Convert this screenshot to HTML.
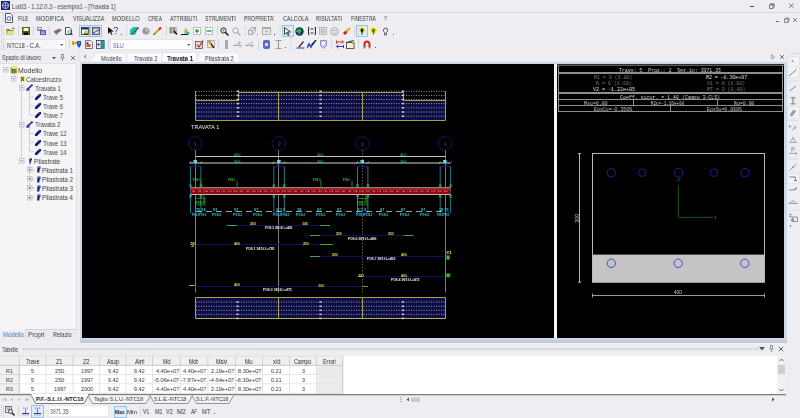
<!DOCTYPE html>
<html><head><meta charset="utf-8">
<style>
*{margin:0;padding:0;box-sizing:border-box}
html,body{width:800px;height:418px;overflow:hidden;background:#eeeef2;-webkit-font-smoothing:antialiased;font-family:"Liberation Sans",sans-serif;color:#1e1e1e;position:relative}
.a{position:absolute;display:block}
.t{position:absolute;white-space:pre;transform-origin:0 0;will-change:transform}
</style></head><body>
<svg class="a" style="left:1px;top:1px;" width="9" height="9" viewBox="0 0 9 9"><rect x="0" y="0" width="9" height="9" fill="#1a237e"/><circle cx="4.5" cy="4.5" r="3" fill="none" stroke="#c8ccf0" stroke-width="1"/><path d="M1.5 4.5h6M4.5 1.5v6" stroke="#c8ccf0" stroke-width=".7"/></svg>
<div class="t" style="left:11.83px;top:3.80px;font-size:6.3px;line-height:6.3px;color:#444;font-weight:400;font-family:'Liberation Sans',sans-serif;transform:scaleX(0.9233);">Ludi3 - 1.12.0.3 - esempio1 - [Travata 1]</div>
<div class="a" style="left:750px;top:6px;width:4px;height:1px;background:#555;"></div>
<svg class="a" style="left:768px;top:2px;" width="8" height="8" viewBox="0 0 8 8"><rect x="1.5" y="3" width="3.5" height="3.5" fill="none" stroke="#555" stroke-width=".7"/><path d="M2.5 3V1.8h3.7v3.5H5" fill="none" stroke="#555" stroke-width=".7"/><path d="M2.5 2.5h3.7" stroke="#555" stroke-width=".6"/></svg>
<svg class="a" style="left:788px;top:2px;" width="7" height="7" viewBox="0 0 7 7"><path d="M1.2 1.5L5.5 5.8M5.5 1.5L1.2 5.8" stroke="#444" stroke-width=".7"/></svg>
<div class="a" style="left:0px;top:12px;width:800px;height:1px;background:#d9d9de;"></div>
<svg class="a" style="left:2px;top:13px;" width="2" height="10" viewBox="0 0 2 10"><path d="M1 0v10" stroke="#b8b8c0" stroke-width="1" stroke-dasharray="1 1"/></svg>
<svg class="a" style="left:5px;top:13px;" width="8" height="10" viewBox="0 0 8 10"><path d="M.5 .5h5l2 2v7h-7z" fill="#fff" stroke="#333" stroke-width=".8"/><circle cx="4" cy="5.5" r="2.5" fill="#7080d0"/><circle cx="4" cy="5.5" r="1.2" fill="#fff"/></svg>
<div class="t" style="left:17.71px;top:15.30px;font-size:7px;line-height:7px;color:#3a3a3a;font-weight:400;font-family:'Liberation Sans',sans-serif;transform:scaleX(0.7035);">FILE</div>
<div class="t" style="left:36.44px;top:15.30px;font-size:7px;line-height:7px;color:#3a3a3a;font-weight:400;font-family:'Liberation Sans',sans-serif;transform:scaleX(0.8235);">MODIFICA</div>
<div class="t" style="left:72.72px;top:15.30px;font-size:7px;line-height:7px;color:#3a3a3a;font-weight:400;font-family:'Liberation Sans',sans-serif;transform:scaleX(0.7812);">VISUALIZZA</div>
<div class="t" style="left:112.30px;top:15.30px;font-size:7px;line-height:7px;color:#3a3a3a;font-weight:400;font-family:'Liberation Sans',sans-serif;transform:scaleX(0.8103);">MODELLO</div>
<div class="t" style="left:147.85px;top:15.30px;font-size:7px;line-height:7px;color:#3a3a3a;font-weight:400;font-family:'Liberation Sans',sans-serif;transform:scaleX(0.7235);">CREA</div>
<div class="t" style="left:170.22px;top:15.30px;font-size:7px;line-height:7px;color:#3a3a3a;font-weight:400;font-family:'Liberation Sans',sans-serif;transform:scaleX(0.7622);">ATTRIBUTI</div>
<div class="t" style="left:205.36px;top:15.30px;font-size:7px;line-height:7px;color:#3a3a3a;font-weight:400;font-family:'Liberation Sans',sans-serif;transform:scaleX(0.7525);">STRUMENTI</div>
<div class="t" style="left:243.99px;top:15.30px;font-size:7px;line-height:7px;color:#3a3a3a;font-weight:400;font-family:'Liberation Sans',sans-serif;transform:scaleX(0.7335);">PROPRIETA'</div>
<div class="t" style="left:282.73px;top:15.30px;font-size:7px;line-height:7px;color:#3a3a3a;font-weight:400;font-family:'Liberation Sans',sans-serif;transform:scaleX(0.7801);">CALCOLA</div>
<div class="t" style="left:316.48px;top:15.30px;font-size:7px;line-height:7px;color:#3a3a3a;font-weight:400;font-family:'Liberation Sans',sans-serif;transform:scaleX(0.7575);">RISULTATI</div>
<div class="t" style="left:351.10px;top:15.30px;font-size:7px;line-height:7px;color:#3a3a3a;font-weight:400;font-family:'Liberation Sans',sans-serif;transform:scaleX(0.7165);">FINESTRA</div>
<div class="t" style="left:383.89px;top:15.30px;font-size:7px;line-height:7px;color:#3a3a3a;font-weight:400;font-family:'Liberation Sans',sans-serif;transform:scaleX(0.7440);">?</div>
<div class="a" style="left:776px;top:21px;width:3px;height:1px;background:#666;"></div>
<svg class="a" style="left:783px;top:17px;" width="7" height="6" viewBox="0 0 7 6"><rect x="1.5" y="2" width="3.5" height="3.5" fill="none" stroke="#666" stroke-width=".7"/><path d="M2.5 2V1h3.5v3.3H5" fill="none" stroke="#666" stroke-width=".7"/></svg>
<svg class="a" style="left:792px;top:17px;" width="6" height="6" viewBox="0 0 6 6"><path d="M1 1L5 5M5 1L1 5" stroke="#555" stroke-width=".7"/></svg>
<div class="t" style="left:1.95px;top:53.90px;font-size:7px;line-height:7px;color:#3a3a3a;font-weight:400;font-family:'Liberation Sans',sans-serif;transform:scaleX(0.7885);">Spazio di lavoro</div>
<svg class="a" style="left:51.5px;top:56.5px;" width="5" height="4" viewBox="0 0 5 4"><path d="M0 0h4L2 2.5z" fill="#555"/></svg>
<svg class="a" style="left:60px;top:54px;" width="5" height="7" viewBox="0 0 5 7"><path d="M1 .5h3M1.5 .5v3.5M3.5 .5v3.5M.5 4h4M2.5 4v3" stroke="#777" stroke-width=".7" fill="none"/></svg>
<svg class="a" style="left:69.5px;top:54.5px;" width="6" height="6" viewBox="0 0 6 6"><path d="M1 1L5 5M5 1L1 5" stroke="#555" stroke-width=".8"/></svg>
<div class="a" style="left:79px;top:50px;width:1px;height:13px;background:#e2e2e6;"></div>
<div class="a" style="left:0px;top:63px;width:77px;height:267px;background:#f5f5f7;border-right:1px solid #dedee3;border-top:1px solid #e2e2e6"></div>
<div class="a" style="left:25px;top:329px;width:53px;height:11px;background:#ececf0;border-top:1px solid #d4d4d8;border-left:1px solid #d8d8dc"></div>
<div class="t" style="left:3.32px;top:331.00px;font-size:7px;line-height:7px;color:#3d7ab8;font-weight:400;font-family:'Liberation Sans',sans-serif;transform:scaleX(0.8538);">Modello</div>
<div class="t" style="left:27.80px;top:331.00px;font-size:7px;line-height:7px;color:#3a3a3a;font-weight:400;font-family:'Liberation Sans',sans-serif;transform:scaleX(0.8900);">Propri</div>
<div class="t" style="left:52.55px;top:331.00px;font-size:7px;line-height:7px;color:#3a3a3a;font-weight:400;font-family:'Liberation Sans',sans-serif;transform:scaleX(0.7998);">Relazio</div>
<div class="a" style="left:80px;top:62px;width:707px;height:281px;background:#cdd7e6;"></div>
<div class="a" style="left:80px;top:340px;width:707px;height:3px;background:#c4cad8;"></div>
<div class="a" style="left:82px;top:64px;width:472px;height:274px;background:#000;"></div>
<div class="a" style="left:554px;top:64px;width:3px;height:274px;background:#f4f4f6;"></div>
<div class="a" style="left:557px;top:64px;width:227px;height:274px;background:#000;"></div>
<svg class="a" style="left:82px;top:50px;" width="165" height="13" viewBox="0 0 165 13"><path d="M2 6.5l2-2v4z" fill="#888"/><path d="M7 12L15 3H44V12z" fill="#fafafc" stroke="#dcdce0" stroke-width=".5"/><path d="M44 12L46 3H80V12z" fill="#fafafc" stroke="#dcdce0" stroke-width=".5"/><path d="M79 12L81 2.5H115V12z" fill="#ffffff" stroke="#d0d0d6" stroke-width=".5"/><path d="M115 12L117 3H157V12z" fill="#fafafc" stroke="#dcdce0" stroke-width=".5"/></svg>
<div class="t" style="left:101.32px;top:54.60px;font-size:7px;line-height:7px;color:#3a3a3a;font-weight:400;font-family:'Liberation Sans',sans-serif;transform:scaleX(0.8538);">Modello</div>
<div class="t" style="left:133.86px;top:54.60px;font-size:7px;line-height:7px;color:#3a3a3a;font-weight:400;font-family:'Liberation Sans',sans-serif;transform:scaleX(0.7994);">Travata 2</div>
<div class="t" style="left:166.94px;top:54.60px;font-size:7px;line-height:7px;color:#111;font-weight:700;font-family:'Liberation Sans',sans-serif;transform:scaleX(0.8571);">Travata 1</div>
<div class="t" style="left:204.54px;top:54.60px;font-size:7px;line-height:7px;color:#3a3a3a;font-weight:400;font-family:'Liberation Sans',sans-serif;transform:scaleX(0.8214);">Pilastrata 2</div>
<svg class="a" style="left:771px;top:54px;" width="5" height="6" viewBox="0 0 5 6"><path d="M.8 .8L3.6 3 .8 5.2z" fill="none" stroke="#777" stroke-width=".7"/></svg>
<svg class="a" style="left:778.5px;top:54px;" width="6" height="6" viewBox="0 0 6 6"><path d="M1 1L5 5M5 1L1 5" stroke="#555" stroke-width=".8"/></svg>
<div class="t" style="left:2.07px;top:347.00px;font-size:6.5px;line-height:6.5px;color:#3a3a3a;font-weight:400;font-family:'Liberation Sans',sans-serif;transform:scaleX(0.7841);">Tabelle</div>
<svg class="a" style="left:23px;top:347px;" width="735" height="4" viewBox="0 0 735 4"><path d="M0 2H735" stroke="#b8b8c0" stroke-width="1.3" stroke-dasharray="1 1"/></svg>
<svg class="a" style="left:759px;top:347px;" width="6" height="4" viewBox="0 0 6 4"><path d="M0 0h6L3 3.5z" fill="#555"/></svg>
<svg class="a" style="left:769px;top:345px;" width="5" height="7" viewBox="0 0 5 7"><path d="M1 .5h3M1.5 .5v3.5M3.5 .5v3.5M.5 4h4M2.5 4v3" stroke="#777" stroke-width=".7" fill="none"/></svg>
<svg class="a" style="left:778px;top:346px;" width="6" height="6" viewBox="0 0 6 6"><path d="M.8 .8L5.2 5.2M5.2 .8L.8 5.2" stroke="#555" stroke-width=".9"/></svg>
<div class="a" style="left:0px;top:356px;width:786px;height:40px;background:#ffffff;"></div>
<svg class="a" style="left:1px;top:25px;" width="3" height="12" viewBox="0 0 3 12"><path d="M.5 0V12M2.5 1V12" stroke="#c2c2c8" stroke-width="1" stroke-dasharray="1 1"/></svg>
<svg class="a" style="left:6px;top:27px;" width="9" height="8" viewBox="0 0 9 8"><path d="M.5 2h3l1 1h3v4.5H.5z" fill="#8c8c1c"/><path d="M1.5 4h7l-1.5 3.5h-6z" fill="#e4e47a"/><path d="M6 1.5l1.5-.5 1 1" stroke="#222" stroke-width=".8" fill="none"/></svg>
<div class="a" style="left:18px;top:26px;width:1px;height:10px;background:#d6d6dc;"></div>
<svg class="a" style="left:22px;top:27px;" width="8" height="8" viewBox="0 0 8 8"><rect x="0" y="0" width="8" height="8" fill="#55551a"/><rect x="1.5" y="1" width="5" height="3" fill="#f4f4e0"/><rect x="2" y="5.5" width="4" height="2.5" fill="#111"/></svg>
<div class="a" style="left:33px;top:26px;width:1px;height:10px;background:#d6d6dc;"></div>
<svg class="a" style="left:37px;top:27px;" width="9" height="8" viewBox="0 0 9 8"><rect x="0" y="0" width="5" height="4" fill="#9090a8"/><rect x="1" y="1" width="3" height="1" fill="#fff"/><rect x="3" y="3" width="6" height="5" fill="#5858b0"/><rect x="4" y="4.5" width="4" height="1" fill="#d0d0f0"/><rect x="4" y="6" width="4" height=".8" fill="#d0d0f0"/></svg>
<div class="a" style="left:49px;top:26px;width:1px;height:10px;background:#d6d6dc;"></div>
<svg class="a" style="left:53px;top:27px;" width="9" height="8" viewBox="0 0 9 8"><path d="M1 4l5-3 3 2-5 4z" fill="#777"/><path d="M1 4l3 3v1L1 5z" fill="#444"/><path d="M3 4l2-1 1 1-2 1z" fill="#e04040"/><path d="M2 3.5l4-2.5 2 1.5" fill="none" stroke="#fff" stroke-width=".6"/></svg>
<svg class="a" style="left:65px;top:27px;" width="8" height="8" viewBox="0 0 8 8"><path d="M.5 .5h4l2 2v5H.5z" fill="#fff" stroke="#222" stroke-width=".8"/><circle cx="4.5" cy="5" r="1.6" fill="none" stroke="#2a8aa0" stroke-width=".9"/><path d="M5.5 6l2 2" stroke="#222" stroke-width="1"/></svg>
<div class="a" style="left:79px;top:25px;width:11px;height:12px;background:#dfeaf6;border:1px solid #99c4e8"></div>
<div class="a" style="left:90px;top:25px;width:12px;height:12px;background:#dfeaf6;border:1px solid #99c4e8"></div>
<svg class="a" style="left:81px;top:27px;" width="8" height="8" viewBox="0 0 8 8"><rect x=".5" y=".5" width="7" height="7" fill="#fff" stroke="#333" stroke-width=".8"/><rect x=".5" y=".5" width="7" height="2" fill="#203080"/><circle cx="5" cy="5.5" r="2.3" fill="#d8d040"/><rect x="3" y="6.5" width="4" height="1.5" fill="#333"/></svg>
<svg class="a" style="left:92px;top:27px;" width="9" height="8" viewBox="0 0 9 8"><rect x=".5" y=".5" width="7" height="7" fill="#9aa" stroke="#444" stroke-width=".8"/><rect x="1.5" y="2.5" width="5" height="4" fill="#e8e8f0"/><path d="M1 6l6-3" stroke="#2040c0" stroke-width="1"/><path d="M7 .5l1.5 1.5" stroke="#d03030" stroke-width="1"/></svg>
<svg class="a" style="left:108px;top:27px;" width="10" height="8" viewBox="0 0 10 8"><path d="M0 0v7l2-2 1.5 3 1-.5-1.5-3h3z" fill="#111"/><path d="M6 1.5q0-1.5 1.8-1.5T9.5 1.7c0 1.3-1.6 1.5-1.6 3" fill="none" stroke="#203070" stroke-width="1"/><rect x="7.4" y="6" width="1" height="1.2" fill="#203070"/></svg>
<div class="a" style="left:121px;top:34px;width:1px;height:1px;background:#555;"></div>
<svg class="a" style="left:126px;top:25px;" width="2" height="12" viewBox="0 0 2 12"><path d="M1 0V12" stroke="#c8c8ce" stroke-width="1" stroke-dasharray="1 1"/></svg>
<svg class="a" style="left:130px;top:27px;" width="9" height="8" viewBox="0 0 9 8"><path d="M0 3l3-3h6L5 8H0z" fill="#28b8b0"/><path d="M2 7L8 1" stroke="#333" stroke-width="1"/><path d="M8 0l1 1-1 1" fill="#c03030"/></svg>
<svg class="a" style="left:142px;top:27px;" width="8" height="8" viewBox="0 0 8 8"><circle cx="4" cy="4" r="3.6" fill="#9a9a9a"/><circle cx="5" cy="3" r="1.4" fill="#c8c8c8"/></svg>
<svg class="a" style="left:153px;top:27px;" width="9" height="8" viewBox="0 0 9 8"><path d="M1 7.5L8 .5" stroke="#c8a020" stroke-width="1.8"/><path d="M6 2.5L8 .5" stroke="#d02828" stroke-width="2"/><path d="M.5 8l1-1.5" stroke="#333" stroke-width="1"/></svg>
<div class="a" style="left:166px;top:26px;width:1px;height:10px;background:#d6d6dc;"></div>
<svg class="a" style="left:169px;top:27px;" width="9" height="8" viewBox="0 0 9 8"><path d="M0 1h8M0 3h8M0 5h8M2 0v7M5 0v7" stroke="#555" stroke-width=".7"/><path d="M5 4l3 3.5" stroke="#111" stroke-width="1.3"/></svg>
<svg class="a" style="left:181px;top:27px;" width="9" height="8" viewBox="0 0 9 8"><path d="M0 7.5h7" stroke="#111" stroke-width="1"/><path d="M3 6l1-5 2 1 1 3-2 2z" fill="#c8b060"/><circle cx="7" cy="6" r="1.5" fill="#28a8c0"/></svg>
<svg class="a" style="left:193px;top:27px;" width="8" height="8" viewBox="0 0 8 8"><rect x=".5" y=".5" width="7" height="7" fill="#fff" stroke="#777" stroke-width=".7" stroke-dasharray="1 .6"/><path d="M4 2v4M2 4h4" stroke="#20a040" stroke-width="1.4"/></svg>
<svg class="a" style="left:205px;top:27px;" width="8" height="8" viewBox="0 0 8 8"><rect x=".5" y=".5" width="7" height="7" fill="#fff" stroke="#777" stroke-width=".7" stroke-dasharray="1 .6"/><path d="M1.5 4h5" stroke="#20a040" stroke-width="1.4"/></svg>
<div class="a" style="left:217px;top:26px;width:1px;height:10px;background:#d6d6dc;"></div>
<svg class="a" style="left:220px;top:27px;" width="9" height="9" viewBox="0 0 9 9"><circle cx="3.5" cy="3.5" r="2.6" fill="#e8f0e8" stroke="#222" stroke-width="1"/><path d="M5.3 5.3L8.5 8.5" stroke="#111" stroke-width="1.5"/><path d="M2.5 3.5h2M3.5 2.5v2" stroke="#208030" stroke-width=".6"/></svg>
<svg class="a" style="left:232px;top:27px;" width="9" height="9" viewBox="0 0 9 9"><circle cx="3.5" cy="3.5" r="2.6" fill="#f4f4f4" stroke="#999" stroke-width=".9"/><path d="M5.3 5.3L8.5 8.5" stroke="#aaa" stroke-width="1.3"/></svg>
<div class="a" style="left:245px;top:26px;width:1px;height:10px;background:#d6d6dc;"></div>
<svg class="a" style="left:248px;top:27px;" width="9" height="8" viewBox="0 0 9 8"><path d="M.5 3.5l3-3h4v4l-3 3h-4z" fill="#e4e4e8" stroke="#999" stroke-width=".8"/><path d="M.5 3.5h4v4M4.5 3.5l3-3" fill="none" stroke="#999" stroke-width=".7"/></svg>
<div class="a" style="left:257px;top:34px;width:1px;height:1px;background:#888;"></div>
<svg class="a" style="left:262px;top:27px;" width="9" height="8" viewBox="0 0 9 8"><rect x=".5" y=".5" width="8" height="7" fill="#eaeaea" stroke="#999" stroke-width=".8"/><rect x=".5" y=".5" width="8" height="1.5" fill="#aaa"/><rect x="3" y="3.5" width="3" height="2" fill="#bbb"/></svg>
<div class="a" style="left:274px;top:34px;width:1px;height:1px;background:#555;"></div>
<svg class="a" style="left:279px;top:25px;" width="2" height="12" viewBox="0 0 2 12"><path d="M1 0V12" stroke="#c8c8ce" stroke-width="1" stroke-dasharray="1 1"/></svg>
<div class="a" style="left:282px;top:25px;width:12px;height:12px;background:#dfeaf6;border:1px solid #99c4e8"></div>
<svg class="a" style="left:284px;top:27px;" width="7" height="9" viewBox="0 0 7 9"><path d="M.5 .5v7l2-2 1.5 3 1-.5-1.5-3h3z" fill="#fff" stroke="#111" stroke-width=".8"/></svg>
<svg class="a" style="left:295px;top:27px;" width="9" height="9" viewBox="0 0 9 9"><circle cx="4.5" cy="4.5" r="4.2" fill="#1a2a6a"/><path d="M2 2.5l3-1 1.5 2-1 2-1.5 2.5-1-2.5-2-1z" fill="#20c040"/></svg>
<svg class="a" style="left:308px;top:27px;" width="8" height="8" viewBox="0 0 8 8"><path d="M1.5 .5h-1v7h1M6.5 .5h1v7h-1" fill="none" stroke="#222" stroke-width="1"/><path d="M2.5 3l1.5-2 1.5 2M2.5 5l1.5 2 1.5-2" fill="none" stroke="#333" stroke-width=".8"/></svg>
<svg class="a" style="left:319px;top:27px;" width="8" height="8" viewBox="0 0 8 8"><rect x=".5" y=".5" width="7" height="7" fill="#e8e8e8" stroke="#aaa" stroke-width=".7"/><path d="M.5 3h7M.5 5h7M3 .5v7M5 .5v7" stroke="#aaa" stroke-width=".6"/></svg>
<svg class="a" style="left:330px;top:27px;" width="9" height="9" viewBox="0 0 9 9"><circle cx="4.5" cy="4.5" r="4" fill="#e4e4e4" stroke="#aaa" stroke-width=".8"/><path d="M2 3.5h2M5 3.5h2M2.5 6q2 1.5 4 0" stroke="#999" stroke-width=".7" fill="none"/></svg>
<svg class="a" style="left:343px;top:27px;" width="8" height="8" viewBox="0 0 8 8"><path d="M1 7L7 1" stroke="#d8b830" stroke-width="2.4"/><path d="M1 7L3.5 4.5" stroke="#d02020" stroke-width="2.6"/></svg>
<div class="a" style="left:354px;top:26px;width:1px;height:10px;background:#d6d6dc;"></div>
<div class="a" style="left:356px;top:25px;width:12px;height:12px;background:#dfeaf6;border:1px solid #99c4e8"></div>
<svg class="a" style="left:359px;top:27px;" width="6" height="9" viewBox="0 0 6 9"><circle cx="3" cy="3" r="2.8" fill="#f0e020"/><path d="M3 1.5q1.5 0 1.5 1.5T3.5 5v2.5h-1V5Q1.5 4.5 1.5 3T3 1.5" fill="#111"/></svg>
<svg class="a" style="left:370px;top:27px;" width="7" height="9" viewBox="0 0 7 9"><circle cx="3.5" cy="3.5" r="3.3" fill="#f4f020"/><path d="M3.5 1.5q1.8 0 1.8 1.8T4 6v1.8H3V6Q1.7 5 1.7 3.3T3.5 1.5" fill="#7a7a10"/></svg>
<svg class="a" style="left:382px;top:27px;" width="7" height="9" viewBox="0 0 7 9"><path d="M3.5 1q2 0 2 2T4.3 5.5V8h-1.6V5.5Q1.5 4.5 1.5 3t2-2" fill="#fff" stroke="#222" stroke-width=".8"/></svg>
<div class="a" style="left:393px;top:34px;width:1px;height:1px;background:#666;"></div>
<svg class="a" style="left:1px;top:38px;" width="3" height="12" viewBox="0 0 3 12"><path d="M.5 0V12M2.5 1V12" stroke="#c2c2c8" stroke-width="1" stroke-dasharray="1 1"/></svg>
<div class="a" style="left:5px;top:39px;width:61px;height:11px;background:#f6f6f8;border:1px solid #e6e6ea"></div>
<div class="a" style="left:57px;top:40px;width:8px;height:9px;background:#ffffff;"></div>
<div class="t" style="left:6.55px;top:43.00px;font-size:6.8px;line-height:6.8px;color:#333;font-weight:400;font-family:'Liberation Sans',sans-serif;transform:scaleX(0.8274);">NTC18 - C.A.</div>
<svg class="a" style="left:60px;top:44px;" width="4" height="3" viewBox="0 0 4 3"><path d="M0 0h3.5L1.75 2z" fill="#666"/></svg>
<div class="a" style="left:69px;top:39px;width:1px;height:10px;background:#d6d6dc;"></div>
<svg class="a" style="left:72px;top:40px;" width="10" height="9" viewBox="0 0 10 9"><rect x="0" y="2" width="6" height="2" fill="#c8a820"/><rect x="0" y="1" width="2" height="4" fill="#c8a820"/><path d="M5 1h4v4l-2 3-2-3z" fill="#2050c8"/><path d="M6 3h2" stroke="#fff" stroke-width=".6"/></svg>
<svg class="a" style="left:85px;top:40px;" width="8" height="9" viewBox="0 0 8 9"><path d="M.5 .5h5l2 2v6h-7z" fill="#f8f8f8" stroke="#555" stroke-width=".8"/><rect x="1.5" y="4" width="4" height="3" fill="#e05020"/><rect x="1.5" y="2" width="2" height="2" fill="#3050b0"/></svg>
<svg class="a" style="left:96px;top:40px;" width="9" height="9" viewBox="0 0 9 9"><rect x=".5" y=".5" width="7.5" height="8" fill="#e8e8f4" stroke="#334" stroke-width=".8"/><rect x="4.5" y="1" width="4" height="8" fill="#2a9090"/><path d="M2.5 3v3M1 4.5h3" stroke="#2040a0" stroke-width=".8"/></svg>
<div class="a" style="left:108px;top:39px;width:1px;height:10px;background:#d6d6dc;"></div>
<div class="a" style="left:110px;top:39px;width:83px;height:11px;background:#fdfdfd;border:1px solid #e4e4e8"></div>
<div class="t" style="left:112.75px;top:42.50px;font-size:6.8px;line-height:6.8px;color:#5050c8;font-weight:400;font-family:'Liberation Sans',sans-serif;transform:scaleX(0.8058);">SLU</div>
<svg class="a" style="left:187px;top:44px;" width="4" height="3" viewBox="0 0 4 3"><path d="M0 0h3.5L1.75 2z" fill="#666"/></svg>
<svg class="a" style="left:195px;top:40px;" width="9" height="9" viewBox="0 0 9 9"><rect x=".5" y="1.5" width="7" height="7" fill="#ddd" stroke="#555" stroke-width=".8"/><path d="M2 4.5l2 2.5 4-6.5" fill="none" stroke="#e02020" stroke-width="1.2"/></svg>
<svg class="a" style="left:207px;top:40px;" width="9" height="9" viewBox="0 0 9 9"><rect x=".5" y=".5" width="7" height="7" fill="#f0e8c0" stroke="#888" stroke-width=".6"/><path d="M2 1l5 7" stroke="#222" stroke-width="1.3"/><circle cx="3" cy="2.5" r="1.5" fill="#e0a020"/></svg>
<div class="a" style="left:218px;top:39px;width:1px;height:10px;background:#d6d6dc;"></div>
<div class="a" style="left:225px;top:40px;width:3px;height:9px;background:#a8a8a8;"></div>
<svg class="a" style="left:233px;top:40px;" width="10" height="9" viewBox="0 0 10 9"><path d="M0 5.5h9" stroke="#aaa" stroke-width="1"/><path d="M2 5q2.5-3 5 0" fill="none" stroke="#aaa" stroke-width=".8"/><path d="M6.5 1v3M5 2.5h3" stroke="#aaa" stroke-width=".7"/><path d="M7 6v2" stroke="#aaa" stroke-width=".7"/></svg>
<svg class="a" style="left:245px;top:40px;" width="10" height="9" viewBox="0 0 10 9"><path d="M0 5.5h9" stroke="#aaa" stroke-width="1"/><path d="M2 5q2.5-3 5 0" fill="none" stroke="#aaa" stroke-width=".8"/><path d="M5 2.5h3" stroke="#aaa" stroke-width=".7"/><path d="M7 6v2" stroke="#aaa" stroke-width=".7"/></svg>
<div class="a" style="left:258px;top:39px;width:1px;height:10px;background:#d6d6dc;"></div>
<svg class="a" style="left:263px;top:40px;" width="7" height="9" viewBox="0 0 7 9"><rect x=".5" y=".5" width="6" height="8" rx="1" fill="#5a6ad0" stroke="#3040a0" stroke-width=".6"/><rect x="2" y="3" width="3" height="3" fill="#d8dcf8"/></svg>
<svg class="a" style="left:275px;top:40px;" width="7" height="9" viewBox="0 0 7 9"><path d="M.5 .5h6M.5 8.5h6M3.5 .5v8" stroke="#999" stroke-width="1.1"/></svg>
<div class="a" style="left:285px;top:47px;width:1px;height:1px;background:#666;"></div>
<svg class="a" style="left:290px;top:38px;" width="2" height="12" viewBox="0 0 2 12"><path d="M1 0V12" stroke="#c8c8ce" stroke-width="1" stroke-dasharray="1 1"/></svg>
<svg class="a" style="left:296px;top:40px;" width="9" height="9" viewBox="0 0 9 9"><path d="M.5 8h8" stroke="#2838a0" stroke-width="1"/><path d="M2 7l5-6 1 1-5 6z" fill="#333"/><path d="M2 7l1 1" stroke="#c0a040"/></svg>
<svg class="a" style="left:307px;top:40px;" width="10" height="9" viewBox="0 0 10 9"><path d="M0 8l2-4 2 3 2-4" fill="none" stroke="#2a40d0" stroke-width="1.6"/><path d="M5 5l4-5" stroke="#111" stroke-width="1.3"/></svg>
<svg class="a" style="left:320px;top:40px;" width="7" height="9" viewBox="0 0 7 9"><path d="M.5 .5h6v5l-3 3-3-3z" fill="#c8c0f8" stroke="#8070c0" stroke-width=".7"/><rect x="2" y="2" width="3" height="3" fill="#fff"/></svg>
<div class="a" style="left:331px;top:39px;width:1px;height:10px;background:#d6d6dc;"></div>
<svg class="a" style="left:336px;top:40px;" width="8" height="9" viewBox="0 0 8 9"><path d="M.5 .5v3M.5 2h7" stroke="#d03030" stroke-width="1"/><path d="M5.5 0l2 2-2 2" fill="none" stroke="#d03030" stroke-width=".8"/><path d="M7.5 5v3M.5 6.5h7" stroke="#2040d0" stroke-width="1"/><path d="M2.5 4.5l-2 2 2 2" fill="none" stroke="#2040d0" stroke-width=".8"/></svg>
<svg class="a" style="left:346px;top:40px;" width="9" height="9" viewBox="0 0 9 9"><rect x=".5" y="2.5" width="7.5" height="6" fill="#f8f0d8" stroke="#333" stroke-width=".8"/><path d="M.5 2.5l7-2" stroke="#333" stroke-width="1"/><path d="M6 4l2-3" stroke="#d8c020" stroke-width="1.2"/></svg>
<div class="a" style="left:358px;top:39px;width:1px;height:10px;background:#d6d6dc;"></div>
<svg class="a" style="left:363px;top:40px;" width="8" height="9" viewBox="0 0 8 9"><path d="M1.5 7V4a2.5 2.5 0 0 1 5 0v3" fill="none" stroke="#d02020" stroke-width="2"/><rect x="0.5" y="6.5" width="2" height="2" fill="#888"/><rect x="5.5" y="6.5" width="2" height="2" fill="#888"/></svg>
<div class="a" style="left:375px;top:47px;width:1px;height:1px;background:#555;"></div>
<svg class="a" style="left:0;top:0" width="80" height="210"><g stroke="#c8c8cc" stroke-width=".8" fill="none"><path d="M14 69.5V76.13"/><path d="M21.5 81.13V85.26M21.5 90.26V121.78M21.5 126.78V158.3"/><path d="M29.5 90.76V115.15H34M29.5 96.89H34M29.5 106.02000000000001H34"/><path d="M29.5 127.28V151.67000000000002H34M29.5 133.41H34M29.5 142.54000000000002H34"/><path d="M29.5 163.8V167.43M29.5 172.43V176.56M29.5 181.56V185.69M29.5 190.69V194.82"/><path d="M32 169.93H35M32 179.06H35M32 188.19H35M32 197.32H35"/></g></svg>
<svg class="a" style="left:3px;top:66.75px;" width="6" height="6" viewBox="0 0 6 6"><rect x=".5" y=".5" width="4.5" height="4.5" fill="#fafafa" stroke="#b8b8c0" stroke-width=".8"/><path d="M1.5 2.75h2.5" stroke="#555" stroke-width=".7"/></svg>
<svg class="a" style="left:9.5px;top:65.5px;" width="8" height="8" viewBox="0 0 8 8"><rect x=".5" y="1" width="6.5" height="6.5" rx="1" fill="#a8a830"/><rect x="2" y="0" width="5.5" height="3" rx="1" fill="#e4e46a"/><path d="M2.5 7V3.5h2.5V7" stroke="#333" stroke-width=".7" fill="none"/></svg>
<div class="t" style="left:18.45px;top:67.50px;font-size:6.8px;line-height:6.8px;color:#404040;font-weight:400;font-family:'Liberation Sans',sans-serif;transform:scaleX(1.0137);">Modello</div>
<svg class="a" style="left:11px;top:75.88px;" width="6" height="6" viewBox="0 0 6 6"><rect x=".5" y=".5" width="4.5" height="4.5" fill="#fafafa" stroke="#b8b8c0" stroke-width=".8"/><path d="M1.5 2.75h2.5" stroke="#555" stroke-width=".7"/></svg>
<svg class="a" style="left:19.5px;top:75.63px;" width="5" height="6" viewBox="0 0 5 6"><rect x=".5" y=".5" width="4" height="5" fill="#d8d050"/><path d="M1 1l3 4M4 1L1 5" stroke="#333" stroke-width=".9"/></svg>
<div class="t" style="left:26.49px;top:76.63px;font-size:6.8px;line-height:6.8px;color:#404040;font-weight:400;font-family:'Liberation Sans',sans-serif;transform:scaleX(0.9046);">Calcestruzzo</div>
<svg class="a" style="left:19px;top:85.01px;" width="6" height="6" viewBox="0 0 6 6"><rect x=".5" y=".5" width="4.5" height="4.5" fill="#fafafa" stroke="#b8b8c0" stroke-width=".8"/><path d="M1.5 2.75h2.5" stroke="#555" stroke-width=".7"/></svg>
<svg class="a" style="left:26px;top:84.26px;" width="7" height="7" viewBox="0 0 7 7"><path d="M.5 6.5L6.5 .5" stroke="#2838a8" stroke-width="1.8"/><path d="M1 4l2.5 2.5" stroke="#2838a8" stroke-width="1.2"/></svg>
<div class="t" style="left:34.84px;top:85.76px;font-size:6.8px;line-height:6.8px;color:#404040;font-weight:400;font-family:'Liberation Sans',sans-serif;transform:scaleX(0.9124);">Travata 1</div>
<svg class="a" style="left:34.5px;top:93.89px;" width="6" height="6" viewBox="0 0 6 6"><path d="M1 5L5 1" stroke="#0c1a70" stroke-width="2.6" stroke-linecap="round"/><path d="M3.5 1.5l1-1" stroke="#8090e0" stroke-width=".8"/></svg>
<div class="t" style="left:43.05px;top:94.89px;font-size:6.8px;line-height:6.8px;color:#404040;font-weight:400;font-family:'Liberation Sans',sans-serif;transform:scaleX(0.8774);">Trave 5</div>
<svg class="a" style="left:34.5px;top:103.02000000000001px;" width="6" height="6" viewBox="0 0 6 6"><path d="M1 5L5 1" stroke="#0c1a70" stroke-width="2.6" stroke-linecap="round"/><path d="M3.5 1.5l1-1" stroke="#8090e0" stroke-width=".8"/></svg>
<div class="t" style="left:43.05px;top:104.02px;font-size:6.8px;line-height:6.8px;color:#404040;font-weight:400;font-family:'Liberation Sans',sans-serif;transform:scaleX(0.8788);">Trave 6</div>
<svg class="a" style="left:34.5px;top:112.15px;" width="6" height="6" viewBox="0 0 6 6"><path d="M1 5L5 1" stroke="#0c1a70" stroke-width="2.6" stroke-linecap="round"/><path d="M3.5 1.5l1-1" stroke="#8090e0" stroke-width=".8"/></svg>
<div class="t" style="left:43.05px;top:113.15px;font-size:6.8px;line-height:6.8px;color:#404040;font-weight:400;font-family:'Liberation Sans',sans-serif;transform:scaleX(0.8801);">Trave 7</div>
<svg class="a" style="left:19px;top:121.53px;" width="6" height="6" viewBox="0 0 6 6"><rect x=".5" y=".5" width="4.5" height="4.5" fill="#fafafa" stroke="#b8b8c0" stroke-width=".8"/><path d="M1.5 2.75h2.5" stroke="#555" stroke-width=".7"/></svg>
<svg class="a" style="left:26px;top:120.78px;" width="7" height="7" viewBox="0 0 7 7"><path d="M.5 6.5L6.5 .5" stroke="#2838a8" stroke-width="1.8"/><path d="M1 4l2.5 2.5" stroke="#2838a8" stroke-width="1.2"/></svg>
<div class="t" style="left:34.95px;top:122.28px;font-size:6.8px;line-height:6.8px;color:#404040;font-weight:400;font-family:'Liberation Sans',sans-serif;transform:scaleX(0.8909);">Travata 2</div>
<svg class="a" style="left:34.5px;top:130.41px;" width="6" height="6" viewBox="0 0 6 6"><path d="M1 5L5 1" stroke="#0c1a70" stroke-width="2.6" stroke-linecap="round"/><path d="M3.5 1.5l1-1" stroke="#8090e0" stroke-width=".8"/></svg>
<div class="t" style="left:43.05px;top:131.41px;font-size:6.8px;line-height:6.8px;color:#404040;font-weight:400;font-family:'Liberation Sans',sans-serif;transform:scaleX(0.8935);">Trave 12</div>
<svg class="a" style="left:34.5px;top:139.54000000000002px;" width="6" height="6" viewBox="0 0 6 6"><path d="M1 5L5 1" stroke="#0c1a70" stroke-width="2.6" stroke-linecap="round"/><path d="M3.5 1.5l1-1" stroke="#8090e0" stroke-width=".8"/></svg>
<div class="t" style="left:43.05px;top:140.54px;font-size:6.8px;line-height:6.8px;color:#404040;font-weight:400;font-family:'Liberation Sans',sans-serif;transform:scaleX(0.8923);">Trave 13</div>
<svg class="a" style="left:34.5px;top:148.67000000000002px;" width="6" height="6" viewBox="0 0 6 6"><path d="M1 5L5 1" stroke="#0c1a70" stroke-width="2.6" stroke-linecap="round"/><path d="M3.5 1.5l1-1" stroke="#8090e0" stroke-width=".8"/></svg>
<div class="t" style="left:43.05px;top:149.67px;font-size:6.8px;line-height:6.8px;color:#404040;font-weight:400;font-family:'Liberation Sans',sans-serif;transform:scaleX(0.8888);">Trave 14</div>
<svg class="a" style="left:19px;top:158.05px;" width="6" height="6" viewBox="0 0 6 6"><rect x=".5" y=".5" width="4.5" height="4.5" fill="#fafafa" stroke="#b8b8c0" stroke-width=".8"/><path d="M1.5 2.75h2.5" stroke="#555" stroke-width=".7"/></svg>
<svg class="a" style="left:27.5px;top:157.3px;" width="5" height="7" viewBox="0 0 5 7"><path d="M1 1h3v2l-1 1v2.5H1.5z" fill="#1a2a88"/><rect x="1" y=".5" width="2.5" height="1.5" fill="#d8d040"/></svg>
<div class="t" style="left:34.30px;top:158.80px;font-size:6.8px;line-height:6.8px;color:#404040;font-weight:400;font-family:'Liberation Sans',sans-serif;transform:scaleX(0.9282);">Pilastrate</div>
<svg class="a" style="left:27px;top:167.18px;" width="6" height="6" viewBox="0 0 6 6"><rect x=".5" y=".5" width="4.5" height="4.5" fill="#fafafa" stroke="#b8b8c0" stroke-width=".8"/><path d="M1.5 2.75h2.5" stroke="#555" stroke-width=".7"/><path d="M2.75 1.5v2.5" stroke="#555" stroke-width=".7"/></svg>
<svg class="a" style="left:35.5px;top:166.43px;" width="5" height="7" viewBox="0 0 5 7"><path d="M1.5 .5h3v2.5l-1 1v2.5h-2.5z" fill="#1a2a88"/><path d="M2 1.5h2" stroke="#8890d8" stroke-width=".6"/></svg>
<div class="t" style="left:42.30px;top:167.93px;font-size:6.8px;line-height:6.8px;color:#404040;font-weight:400;font-family:'Liberation Sans',sans-serif;transform:scaleX(0.9119);">Pilastrata 1</div>
<svg class="a" style="left:27px;top:176.31px;" width="6" height="6" viewBox="0 0 6 6"><rect x=".5" y=".5" width="4.5" height="4.5" fill="#fafafa" stroke="#b8b8c0" stroke-width=".8"/><path d="M1.5 2.75h2.5" stroke="#555" stroke-width=".7"/><path d="M2.75 1.5v2.5" stroke="#555" stroke-width=".7"/></svg>
<svg class="a" style="left:35.5px;top:175.56px;" width="5" height="7" viewBox="0 0 5 7"><path d="M1.5 .5h3v2.5l-1 1v2.5h-2.5z" fill="#1a2a88"/><path d="M2 1.5h2" stroke="#8890d8" stroke-width=".6"/></svg>
<div class="t" style="left:42.30px;top:177.06px;font-size:6.8px;line-height:6.8px;color:#404040;font-weight:400;font-family:'Liberation Sans',sans-serif;transform:scaleX(0.9119);">Pilastrata 2</div>
<svg class="a" style="left:27px;top:185.44px;" width="6" height="6" viewBox="0 0 6 6"><rect x=".5" y=".5" width="4.5" height="4.5" fill="#fafafa" stroke="#b8b8c0" stroke-width=".8"/><path d="M1.5 2.75h2.5" stroke="#555" stroke-width=".7"/><path d="M2.75 1.5v2.5" stroke="#555" stroke-width=".7"/></svg>
<svg class="a" style="left:35.5px;top:184.69px;" width="5" height="7" viewBox="0 0 5 7"><path d="M1.5 .5h3v2.5l-1 1v2.5h-2.5z" fill="#1a2a88"/><path d="M2 1.5h2" stroke="#8890d8" stroke-width=".6"/></svg>
<div class="t" style="left:42.30px;top:186.19px;font-size:6.8px;line-height:6.8px;color:#404040;font-weight:400;font-family:'Liberation Sans',sans-serif;transform:scaleX(0.9110);">Pilastrata 3</div>
<svg class="a" style="left:27px;top:194.57px;" width="6" height="6" viewBox="0 0 6 6"><rect x=".5" y=".5" width="4.5" height="4.5" fill="#fafafa" stroke="#b8b8c0" stroke-width=".8"/><path d="M1.5 2.75h2.5" stroke="#555" stroke-width=".7"/><path d="M2.75 1.5v2.5" stroke="#555" stroke-width=".7"/></svg>
<svg class="a" style="left:35.5px;top:193.82px;" width="5" height="7" viewBox="0 0 5 7"><path d="M1.5 .5h3v2.5l-1 1v2.5h-2.5z" fill="#1a2a88"/><path d="M2 1.5h2" stroke="#8890d8" stroke-width=".6"/></svg>
<div class="t" style="left:42.31px;top:195.32px;font-size:6.8px;line-height:6.8px;color:#404040;font-weight:400;font-family:'Liberation Sans',sans-serif;transform:scaleX(0.9082);">Pilastrata 4</div>
<svg class="a" style="left:82px;top:64px" width="472" height="274" viewBox="82 64 472 274"><path d="M195.5 100.5H238.5V92.5H403.5V100.5H445.5V120.5H195.5z" fill="#0e0e46"/><path d="M195.5 91V120.5H445.5V91M195.5 100.5H238.5V92.5H403.5V100.5H445.5M278.5 92.5V120.5M362.5 92.5V120.5" stroke="#a8a038" stroke-width="1" fill="none"/><path d="M196 91.3H445" stroke="#c8c8d4" stroke-width=".7" stroke-dasharray="1.1 1.4"/><path d="M196 95.4H445" stroke="#c8c8d4" stroke-width=".7" stroke-dasharray="1.1 1.4"/><path d="M196 99.5H445" stroke="#c8c8d4" stroke-width=".7" stroke-dasharray="1.1 1.4"/><path d="M196 103.6H445" stroke="#c8c8d4" stroke-width=".7" stroke-dasharray="1.1 1.4"/><path d="M196 107.8H445" stroke="#c8c8d4" stroke-width=".7" stroke-dasharray="1.1 1.4"/><path d="M196 112.0H445" stroke="#c8c8d4" stroke-width=".7" stroke-dasharray="1.1 1.4"/><path d="M196 116.2H445" stroke="#c8c8d4" stroke-width=".7" stroke-dasharray="1.1 1.4"/><rect x="236.9" y="90.5" width="2.2" height="1.6" fill="#c4c4c4"/><rect x="236.9" y="94.60000000000001" width="2.2" height="1.6" fill="#c4c4c4"/><rect x="236.9" y="98.7" width="2.2" height="1.6" fill="#c4c4c4"/><rect x="236.9" y="102.8" width="2.2" height="1.6" fill="#c4c4c4"/><rect x="236.9" y="107.0" width="2.2" height="1.6" fill="#c4c4c4"/><rect x="236.9" y="111.2" width="2.2" height="1.6" fill="#c4c4c4"/><rect x="236.9" y="115.4" width="2.2" height="1.6" fill="#c4c4c4"/><rect x="319.4" y="90.5" width="2.2" height="1.6" fill="#c4c4c4"/><rect x="319.4" y="94.60000000000001" width="2.2" height="1.6" fill="#c4c4c4"/><rect x="319.4" y="98.7" width="2.2" height="1.6" fill="#c4c4c4"/><rect x="319.4" y="102.8" width="2.2" height="1.6" fill="#c4c4c4"/><rect x="319.4" y="107.0" width="2.2" height="1.6" fill="#c4c4c4"/><rect x="319.4" y="111.2" width="2.2" height="1.6" fill="#c4c4c4"/><rect x="319.4" y="115.4" width="2.2" height="1.6" fill="#c4c4c4"/><rect x="401.9" y="90.5" width="2.2" height="1.6" fill="#c4c4c4"/><rect x="401.9" y="94.60000000000001" width="2.2" height="1.6" fill="#c4c4c4"/><rect x="401.9" y="98.7" width="2.2" height="1.6" fill="#c4c4c4"/><rect x="401.9" y="102.8" width="2.2" height="1.6" fill="#c4c4c4"/><rect x="401.9" y="107.0" width="2.2" height="1.6" fill="#c4c4c4"/><rect x="401.9" y="111.2" width="2.2" height="1.6" fill="#c4c4c4"/><rect x="401.9" y="115.4" width="2.2" height="1.6" fill="#c4c4c4"/><circle cx="195.3" cy="143.5" r="6.8" fill="none" stroke="#16166e" stroke-width="1"/><circle cx="278.7" cy="143.5" r="6.8" fill="none" stroke="#16166e" stroke-width="1"/><circle cx="362.3" cy="143.5" r="6.8" fill="none" stroke="#16166e" stroke-width="1"/><circle cx="445" cy="143.5" r="6.8" fill="none" stroke="#16166e" stroke-width="1"/><path d="M195.5 150.3V292.5M445.5 150.3V292.5" stroke="#7a7a7a" stroke-width="1"/><path d="M278.5 150.3V292.5" stroke="#7a7a7a" stroke-width="1"/><path d="M362.5 150.3V292.5" stroke="#a0a0a0" stroke-width=".8" stroke-dasharray="1 2"/><path d="M195.5 156.5H445.5" stroke="#c4c4c4" stroke-width="1"/><path d="M190 163H450" stroke="#8c8c8c" stroke-width="1.6"/><path d="M189.3 163.8l1.5-2.4M200.3 163.8l1.5-2.4" stroke="#ddd" stroke-width=".6"/><path d="M272.7 163.8l1.5-2.4M283.7 163.8l1.5-2.4" stroke="#ddd" stroke-width=".6"/><path d="M356.3 163.8l1.5-2.4M367.3 163.8l1.5-2.4" stroke="#ddd" stroke-width=".6"/><path d="M439 163.8l1.5-2.4M450 163.8l1.5-2.4" stroke="#ddd" stroke-width=".6"/><path d="M190.5 166.5V213M200.9 166.5V213" stroke="#168c94" stroke-width=".9"/><path d="M190.5 166.5H200.9M190.5 213H200.9" stroke="#1818a0" stroke-width="1"/><path d="M273.9 166.5V213M284.3 166.5V213" stroke="#168c94" stroke-width=".9"/><path d="M273.9 166.5H284.3M273.9 213H284.3" stroke="#1818a0" stroke-width="1"/><path d="M357.5 166.5V213M367.90000000000003 166.5V213" stroke="#168c94" stroke-width=".9"/><path d="M357.5 166.5H367.90000000000003M357.5 213H367.90000000000003" stroke="#1818a0" stroke-width="1"/><path d="M440.2 166.5V213M450.6 166.5V213" stroke="#168c94" stroke-width=".9"/><path d="M440.2 166.5H450.6M440.2 213H450.6" stroke="#1818a0" stroke-width="1"/><rect x="190.5" y="188" width="260" height="6.3" fill="#8e0c18"/><rect x="190.5" y="188" width="260" height="1.6" fill="#b02c3c" opacity=".8"/><path d="M190.5 187.5H450.5" stroke="#a88c8c" stroke-width=".9"/><path d="M190.5 194.5H450.5" stroke="#c8b4b4" stroke-width="1"/><path d="M192 191.3H449" stroke="#d84030" stroke-width="1.6" stroke-dasharray="2.4 1.4 1.6 1.4" opacity=".9"/><path d="M193.5 191.2H449" stroke="#e09040" stroke-width=".9" stroke-dasharray="1.2 4.8" opacity=".8"/><path d="M196 191.2H449" stroke="#140004" stroke-width="1.4" stroke-dasharray="1 5" opacity=".7"/><circle cx="190.5" cy="185.6" r="1.1" fill="none" stroke="#70d090" stroke-width=".6"/><circle cx="190.5" cy="196.3" r="1.1" fill="none" stroke="#70d090" stroke-width=".6"/><circle cx="200.9" cy="185.6" r="1.1" fill="none" stroke="#70d090" stroke-width=".6"/><circle cx="200.9" cy="196.3" r="1.1" fill="none" stroke="#70d090" stroke-width=".6"/><circle cx="273.9" cy="185.6" r="1.1" fill="none" stroke="#70d090" stroke-width=".6"/><circle cx="273.9" cy="196.3" r="1.1" fill="none" stroke="#70d090" stroke-width=".6"/><circle cx="284.3" cy="185.6" r="1.1" fill="none" stroke="#70d090" stroke-width=".6"/><circle cx="284.3" cy="196.3" r="1.1" fill="none" stroke="#70d090" stroke-width=".6"/><circle cx="357.5" cy="185.6" r="1.1" fill="none" stroke="#70d090" stroke-width=".6"/><circle cx="357.5" cy="196.3" r="1.1" fill="none" stroke="#70d090" stroke-width=".6"/><circle cx="367.90000000000003" cy="185.6" r="1.1" fill="none" stroke="#70d090" stroke-width=".6"/><circle cx="367.90000000000003" cy="196.3" r="1.1" fill="none" stroke="#70d090" stroke-width=".6"/><circle cx="440.2" cy="185.6" r="1.1" fill="none" stroke="#70d090" stroke-width=".6"/><circle cx="440.2" cy="196.3" r="1.1" fill="none" stroke="#70d090" stroke-width=".6"/><circle cx="450.6" cy="185.6" r="1.1" fill="none" stroke="#70d090" stroke-width=".6"/><circle cx="450.6" cy="196.3" r="1.1" fill="none" stroke="#70d090" stroke-width=".6"/><path d="M201 181V187.5" stroke="#20b030" stroke-width=".8"/><path d="M237 181V187.5" stroke="#20b030" stroke-width=".8"/><path d="M321 181V187.5" stroke="#20b030" stroke-width=".8"/><path d="M352 181V187.5" stroke="#20b030" stroke-width=".8"/><path d="M204 194.5V203" stroke="#20b030" stroke-width=".8"/><path d="M366 194.5V203" stroke="#20b030" stroke-width=".8"/><path d="M196 211.5H446" stroke="#c8c8c8" stroke-width=".8" stroke-dasharray="6 4"/><rect x="195.5" y="198.5" width="9.5" height="6.5" fill="none" stroke="#30a030" stroke-width=".7"/><rect x="357.5" y="198.5" width="9.5" height="6.5" fill="none" stroke="#30a030" stroke-width=".7"/><path d="M237 225.5H320" stroke="#0e0e5c" stroke-width="1"/><path d="M226.7 225.5H237" stroke="#48a048" stroke-width="1"/><path d="M320 225.5H330" stroke="#48a048" stroke-width="1"/><path d="M320 235.5H403.5" stroke="#0e0e5c" stroke-width="1"/><path d="M310 235.5H320" stroke="#48a048" stroke-width="1"/><path d="M403.5 235.5H413.5" stroke="#48a048" stroke-width="1"/><path d="M195.3 244.5H320" stroke="#0e0e5c" stroke-width="1"/><path d="M320 244.5H333" stroke="#48a048" stroke-width="1"/><path d="M320 256.5H445" stroke="#0e0e5c" stroke-width="1"/><path d="M310 256.5H320" stroke="#48a048" stroke-width="1"/><path d="M362 276.5H445" stroke="#0e0e5c" stroke-width="1"/><path d="M358 276.5H362" stroke="#48a048" stroke-width="1"/><path d="M195.3 286.5H362" stroke="#0e0e5c" stroke-width="1"/><path d="M362 286.5H368" stroke="#48a048" stroke-width="1"/><rect x="446" y="255" width="4" height="5" fill="#186818"/><rect x="446.8" y="256" width="2.4" height="3" fill="#58a840"/><rect x="446" y="273" width="4.5" height="4.5" fill="#186818"/><rect x="446.8" y="274" width="2.8" height="2.6" fill="#58a840"/><path d="M191 247l3-2.5M192 246.5h2" stroke="#90c040" stroke-width=".8"/><path d="M189 285.5h6" stroke="#90c040" stroke-width="1"/><rect x="195.5" y="297.5" width="250" height="21" fill="#0e0e46"/><g stroke="#a8a038" stroke-width="1" fill="none"><path d="M195.5 297.5H445.5V318.5H195.5z"/><path d="M278.5 297.5V318.5M362.5 297.5V318.5"/></g><path d="M196 302H445" stroke="#c8c8d4" stroke-width=".7" stroke-dasharray="1.1 1.4"/><path d="M196 306.3H445" stroke="#c8c8d4" stroke-width=".7" stroke-dasharray="1.1 1.4"/><path d="M196 310.3H445" stroke="#c8c8d4" stroke-width=".7" stroke-dasharray="1.1 1.4"/><path d="M196 314.3H445" stroke="#c8c8d4" stroke-width=".7" stroke-dasharray="1.1 1.4"/><path d="M196 318.4H445" stroke="#c8c8d4" stroke-width=".7" stroke-dasharray="1.1 1.4"/><rect x="236.4" y="301.2" width="2.2" height="1.6" fill="#c4c4c4"/><rect x="236.4" y="305.5" width="2.2" height="1.6" fill="#c4c4c4"/><rect x="236.4" y="309.5" width="2.2" height="1.6" fill="#c4c4c4"/><rect x="236.4" y="313.5" width="2.2" height="1.6" fill="#c4c4c4"/><rect x="236.4" y="317.59999999999997" width="2.2" height="1.6" fill="#c4c4c4"/><rect x="319.4" y="301.2" width="2.2" height="1.6" fill="#c4c4c4"/><rect x="319.4" y="305.5" width="2.2" height="1.6" fill="#c4c4c4"/><rect x="319.4" y="309.5" width="2.2" height="1.6" fill="#c4c4c4"/><rect x="319.4" y="313.5" width="2.2" height="1.6" fill="#c4c4c4"/><rect x="319.4" y="317.59999999999997" width="2.2" height="1.6" fill="#c4c4c4"/><rect x="401.9" y="301.2" width="2.2" height="1.6" fill="#c4c4c4"/><rect x="401.9" y="305.5" width="2.2" height="1.6" fill="#c4c4c4"/><rect x="401.9" y="309.5" width="2.2" height="1.6" fill="#c4c4c4"/><rect x="401.9" y="313.5" width="2.2" height="1.6" fill="#c4c4c4"/><rect x="401.9" y="317.59999999999997" width="2.2" height="1.6" fill="#c4c4c4"/></svg>
<div class="t" style="left:190.86px;top:124.80px;font-size:5.2px;line-height:5.2px;color:#e8e8e8;font-weight:400;font-family:'Liberation Sans',sans-serif;transform:scaleX(1.0726);">TRAVATA 1</div>
<div class="t" style="left:194.15px;top:142.10px;font-size:5px;line-height:5px;color:#a02898;font-weight:400;font-family:'Liberation Sans',sans-serif;transform:scaleX(0.9302);">1</div>
<div class="t" style="left:277.68px;top:142.10px;font-size:5px;line-height:5px;color:#a02898;font-weight:400;font-family:'Liberation Sans',sans-serif;transform:scaleX(0.8791);">2</div>
<div class="t" style="left:361.33px;top:142.10px;font-size:5px;line-height:5px;color:#a02898;font-weight:400;font-family:'Liberation Sans',sans-serif;transform:scaleX(0.8511);">3</div>
<div class="t" style="left:444.10px;top:142.10px;font-size:5px;line-height:5px;color:#a02898;font-weight:400;font-family:'Liberation Sans',sans-serif;transform:scaleX(0.8000);">4</div>
<div class="t" style="left:233.91px;top:153.30px;font-size:4px;line-height:4px;color:#20c8c8;font-weight:400;font-family:'Liberation Sans',sans-serif;transform:scaleX(0.9375);">400</div>
<div class="t" style="left:233.85px;top:159.80px;font-size:4px;line-height:4px;color:#20c8c8;font-weight:400;font-family:'Liberation Sans',sans-serif;transform:scaleX(0.9494);">366</div>
<div class="t" style="left:317.41px;top:153.30px;font-size:4px;line-height:4px;color:#20c8c8;font-weight:400;font-family:'Liberation Sans',sans-serif;transform:scaleX(0.9375);">400</div>
<div class="t" style="left:317.35px;top:159.80px;font-size:4px;line-height:4px;color:#20c8c8;font-weight:400;font-family:'Liberation Sans',sans-serif;transform:scaleX(0.9494);">366</div>
<div class="t" style="left:399.91px;top:153.30px;font-size:4px;line-height:4px;color:#20c8c8;font-weight:400;font-family:'Liberation Sans',sans-serif;transform:scaleX(0.9375);">400</div>
<div class="t" style="left:399.85px;top:159.80px;font-size:4px;line-height:4px;color:#20c8c8;font-weight:400;font-family:'Liberation Sans',sans-serif;transform:scaleX(0.9494);">366</div>
<div class="a" style="left:193.1px;top:159.5px;width:4.4px;height:3.2px;background:#1a9aa0"></div>
<div class="t" style="left:193.73px;top:161.00px;font-size:3.8px;line-height:3.8px;color:#c0ffff;font-weight:700;font-family:'Liberation Sans',sans-serif;transform:scaleX(0.7555);">30</div>
<div class="a" style="left:276.5px;top:159.5px;width:4.4px;height:3.2px;background:#1a9aa0"></div>
<div class="t" style="left:277.13px;top:161.00px;font-size:3.8px;line-height:3.8px;color:#c0ffff;font-weight:700;font-family:'Liberation Sans',sans-serif;transform:scaleX(0.7555);">30</div>
<div class="a" style="left:360.1px;top:159.5px;width:4.4px;height:3.2px;background:#1a9aa0"></div>
<div class="t" style="left:360.73px;top:161.00px;font-size:3.8px;line-height:3.8px;color:#c0ffff;font-weight:700;font-family:'Liberation Sans',sans-serif;transform:scaleX(0.7555);">30</div>
<div class="a" style="left:442.8px;top:159.5px;width:4.4px;height:3.2px;background:#1a9aa0"></div>
<div class="t" style="left:443.43px;top:161.00px;font-size:3.8px;line-height:3.8px;color:#c0ffff;font-weight:700;font-family:'Liberation Sans',sans-serif;transform:scaleX(0.7555);">30</div>
<div class="t" style="left:193.23px;top:178.30px;font-size:4px;line-height:4px;color:#38c838;font-weight:700;font-family:'Liberation Sans',sans-serif;transform:scaleX(0.6567);">POS.1</div>
<div class="t" style="left:228.33px;top:178.30px;font-size:4px;line-height:4px;color:#38c838;font-weight:700;font-family:'Liberation Sans',sans-serif;transform:scaleX(0.6567);">POS.1</div>
<div class="t" style="left:312.83px;top:178.30px;font-size:4px;line-height:4px;color:#38c838;font-weight:700;font-family:'Liberation Sans',sans-serif;transform:scaleX(0.6567);">POS.5</div>
<div class="t" style="left:343.33px;top:178.30px;font-size:4px;line-height:4px;color:#38c838;font-weight:700;font-family:'Liberation Sans',sans-serif;transform:scaleX(0.6567);">POS.1</div>
<div class="t" style="left:196.22px;top:200.80px;font-size:4px;line-height:4px;color:#38c838;font-weight:700;font-family:'Liberation Sans',sans-serif;transform:scaleX(0.6854);">POS.3</div>
<div class="t" style="left:356.82px;top:200.80px;font-size:4px;line-height:4px;color:#38c838;font-weight:700;font-family:'Liberation Sans',sans-serif;transform:scaleX(0.6854);">POS.3</div>
<div class="t" style="left:195.83px;top:209.00px;font-size:3.8px;line-height:3.8px;color:#30d0d0;font-weight:700;font-family:'Liberation Sans',sans-serif;transform:scaleX(0.9767);">75 18</div>
<div class="t" style="left:212.86px;top:209.00px;font-size:3.8px;line-height:3.8px;color:#30d0d0;font-weight:700;font-family:'Liberation Sans',sans-serif;transform:scaleX(1.0220);">97</div>
<div class="t" style="left:233.86px;top:209.00px;font-size:3.8px;line-height:3.8px;color:#30d0d0;font-weight:700;font-family:'Liberation Sans',sans-serif;transform:scaleX(1.0220);">97</div>
<div class="t" style="left:253.86px;top:209.00px;font-size:3.8px;line-height:3.8px;color:#30d0d0;font-weight:700;font-family:'Liberation Sans',sans-serif;transform:scaleX(1.0220);">97</div>
<div class="t" style="left:275.85px;top:209.00px;font-size:3.8px;line-height:3.8px;color:#30d0d0;font-weight:700;font-family:'Liberation Sans',sans-serif;transform:scaleX(0.6241);">18 75 18</div>
<div class="t" style="left:296.74px;top:209.00px;font-size:3.8px;line-height:3.8px;color:#30d0d0;font-weight:700;font-family:'Liberation Sans',sans-serif;transform:scaleX(1.0371);">18</div>
<div class="t" style="left:316.86px;top:209.00px;font-size:3.8px;line-height:3.8px;color:#30d0d0;font-weight:700;font-family:'Liberation Sans',sans-serif;transform:scaleX(1.0220);">97</div>
<div class="t" style="left:336.86px;top:209.00px;font-size:3.8px;line-height:3.8px;color:#30d0d0;font-weight:700;font-family:'Liberation Sans',sans-serif;transform:scaleX(1.0220);">97</div>
<div class="t" style="left:356.85px;top:209.00px;font-size:3.8px;line-height:3.8px;color:#30d0d0;font-weight:700;font-family:'Liberation Sans',sans-serif;transform:scaleX(0.6241);">18 75 18</div>
<div class="t" style="left:379.86px;top:209.00px;font-size:3.8px;line-height:3.8px;color:#30d0d0;font-weight:700;font-family:'Liberation Sans',sans-serif;transform:scaleX(1.0220);">97</div>
<div class="t" style="left:400.86px;top:209.00px;font-size:3.8px;line-height:3.8px;color:#30d0d0;font-weight:700;font-family:'Liberation Sans',sans-serif;transform:scaleX(1.0220);">97</div>
<div class="t" style="left:420.86px;top:209.00px;font-size:3.8px;line-height:3.8px;color:#30d0d0;font-weight:700;font-family:'Liberation Sans',sans-serif;transform:scaleX(1.0220);">97</div>
<div class="t" style="left:438.76px;top:209.00px;font-size:3.8px;line-height:3.8px;color:#30d0d0;font-weight:700;font-family:'Liberation Sans',sans-serif;transform:scaleX(0.9827);">18 75</div>
<div class="t" style="left:191.84px;top:213.50px;font-size:3.8px;line-height:3.8px;color:#30d0d0;font-weight:700;font-family:'Liberation Sans',sans-serif;transform:scaleX(0.6369);">POS.2POS.2</div>
<div class="t" style="left:211.79px;top:213.50px;font-size:3.8px;line-height:3.8px;color:#30d0d0;font-weight:700;font-family:'Liberation Sans',sans-serif;transform:scaleX(0.8340);">POS.2</div>
<div class="t" style="left:232.79px;top:213.50px;font-size:3.8px;line-height:3.8px;color:#30d0d0;font-weight:700;font-family:'Liberation Sans',sans-serif;transform:scaleX(0.8340);">POS.2</div>
<div class="t" style="left:252.79px;top:213.50px;font-size:3.8px;line-height:3.8px;color:#30d0d0;font-weight:700;font-family:'Liberation Sans',sans-serif;transform:scaleX(0.8340);">POS.2</div>
<div class="t" style="left:272.82px;top:213.50px;font-size:3.8px;line-height:3.8px;color:#30d0d0;font-weight:700;font-family:'Liberation Sans',sans-serif;transform:scaleX(0.7278);">POS.2POS.2</div>
<div class="t" style="left:295.79px;top:213.50px;font-size:3.8px;line-height:3.8px;color:#30d0d0;font-weight:700;font-family:'Liberation Sans',sans-serif;transform:scaleX(0.8340);">POS.2</div>
<div class="t" style="left:315.79px;top:213.50px;font-size:3.8px;line-height:3.8px;color:#30d0d0;font-weight:700;font-family:'Liberation Sans',sans-serif;transform:scaleX(0.8340);">POS.2</div>
<div class="t" style="left:335.79px;top:213.50px;font-size:3.8px;line-height:3.8px;color:#30d0d0;font-weight:700;font-family:'Liberation Sans',sans-serif;transform:scaleX(0.8340);">POS.2</div>
<div class="t" style="left:355.82px;top:213.50px;font-size:3.8px;line-height:3.8px;color:#30d0d0;font-weight:700;font-family:'Liberation Sans',sans-serif;transform:scaleX(0.7278);">POS.2POS.2</div>
<div class="t" style="left:378.79px;top:213.50px;font-size:3.8px;line-height:3.8px;color:#30d0d0;font-weight:700;font-family:'Liberation Sans',sans-serif;transform:scaleX(0.8340);">POS.2</div>
<div class="t" style="left:399.79px;top:213.50px;font-size:3.8px;line-height:3.8px;color:#30d0d0;font-weight:700;font-family:'Liberation Sans',sans-serif;transform:scaleX(0.8340);">POS.2</div>
<div class="t" style="left:419.79px;top:213.50px;font-size:3.8px;line-height:3.8px;color:#30d0d0;font-weight:700;font-family:'Liberation Sans',sans-serif;transform:scaleX(0.8340);">POS.2</div>
<div class="t" style="left:436.87px;top:213.50px;font-size:3.8px;line-height:3.8px;color:#30d0d0;font-weight:700;font-family:'Liberation Sans',sans-serif;transform:scaleX(0.5459);">POS.2POS.2</div>
<div class="t" style="left:264.80px;top:226.00px;font-size:4px;line-height:4px;color:#f0f0f0;font-weight:700;font-family:'Liberation Sans',sans-serif;transform:scaleX(0.7710);">POS.5 2Φ16 L=496</div>
<div class="t" style="left:347.79px;top:236.50px;font-size:4px;line-height:4px;color:#f0f0f0;font-weight:700;font-family:'Liberation Sans',sans-serif;transform:scaleX(0.7995);">POS.6 2Φ16 L=496</div>
<div class="t" style="left:245.79px;top:246.60px;font-size:4px;line-height:4px;color:#f0f0f0;font-weight:700;font-family:'Liberation Sans',sans-serif;transform:scaleX(0.7986);">POS.1 1Φ16 L=785</div>
<div class="t" style="left:366.79px;top:257.30px;font-size:4px;line-height:4px;color:#f0f0f0;font-weight:700;font-family:'Liberation Sans',sans-serif;transform:scaleX(0.7995);">POS.7 3Φ16 L=803</div>
<div class="t" style="left:390.79px;top:278.00px;font-size:4px;line-height:4px;color:#f0f0f0;font-weight:700;font-family:'Liberation Sans',sans-serif;transform:scaleX(0.7995);">POS.4 3Φ16 L=473</div>
<div class="t" style="left:263.09px;top:288.30px;font-size:4px;line-height:4px;color:#f0f0f0;font-weight:700;font-family:'Liberation Sans',sans-serif;transform:scaleX(0.8129);">POS.3 1Φ16 L=875</div>
<div class="t" style="left:250.38px;top:222.00px;font-size:4px;line-height:4px;color:#e4e040;font-weight:700;font-family:'Liberation Sans',sans-serif;transform:scaleX(0.8648);">250</div>
<div class="t" style="left:302.27px;top:222.00px;font-size:4px;line-height:4px;color:#e4e040;font-weight:700;font-family:'Liberation Sans',sans-serif;transform:scaleX(0.8730);">145</div>
<div class="t" style="left:335.88px;top:232.30px;font-size:4px;line-height:4px;color:#e4e040;font-weight:700;font-family:'Liberation Sans',sans-serif;transform:scaleX(0.8648);">250</div>
<div class="t" style="left:387.88px;top:232.30px;font-size:4px;line-height:4px;color:#e4e040;font-weight:700;font-family:'Liberation Sans',sans-serif;transform:scaleX(0.8648);">250</div>
<div class="t" style="left:234.35px;top:242.40px;font-size:4px;line-height:4px;color:#e4e040;font-weight:700;font-family:'Liberation Sans',sans-serif;transform:scaleX(0.8540);">400</div>
<div class="t" style="left:302.88px;top:242.40px;font-size:4px;line-height:4px;color:#e4e040;font-weight:700;font-family:'Liberation Sans',sans-serif;transform:scaleX(0.8648);">250</div>
<div class="t" style="left:332.28px;top:253.00px;font-size:4px;line-height:4px;color:#e4e040;font-weight:700;font-family:'Liberation Sans',sans-serif;transform:scaleX(0.8648);">250</div>
<div class="t" style="left:401.45px;top:253.00px;font-size:4px;line-height:4px;color:#e4e040;font-weight:700;font-family:'Liberation Sans',sans-serif;transform:scaleX(0.8540);">400</div>
<div class="t" style="left:357.67px;top:274.20px;font-size:4px;line-height:4px;color:#e4e040;font-weight:700;font-family:'Liberation Sans',sans-serif;transform:scaleX(1.3158);">30</div>
<div class="t" style="left:401.45px;top:274.20px;font-size:4px;line-height:4px;color:#e4e040;font-weight:700;font-family:'Liberation Sans',sans-serif;transform:scaleX(0.8540);">400</div>
<div class="t" style="left:234.35px;top:283.20px;font-size:4px;line-height:4px;color:#e4e040;font-weight:700;font-family:'Liberation Sans',sans-serif;transform:scaleX(0.8540);">400</div>
<div class="t" style="left:317.77px;top:284.00px;font-size:4px;line-height:4px;color:#e4e040;font-weight:700;font-family:'Liberation Sans',sans-serif;transform:scaleX(0.8814);">100</div>
<div class="t" style="left:445.87px;top:251.30px;font-size:4px;line-height:4px;color:#e4e040;font-weight:700;font-family:'Liberation Sans',sans-serif;transform:scaleX(1.2972);">31</div>
<div class="t" style="left:189.87px;top:242.00px;font-size:4px;line-height:4px;color:#e4e040;font-weight:700;font-family:'Liberation Sans',sans-serif;transform:scaleX(1.3158);">30</div>
<svg class="a" style="left:557px;top:64px" width="227" height="274" viewBox="557 64 227 274"><rect x="557" y="64" width="227" height="1" fill="#2e2e2e"/><rect x="557" y="65" width="227" height="1" fill="#5a5a5a"/><rect x="558" y="72" width="225" height="1" fill="#8e8e8e"/><rect x="558" y="73" width="225" height="1" fill="#8e8e8e"/><rect x="558" y="92" width="225" height="1" fill="#8e8e8e"/><rect x="558" y="93" width="225" height="1" fill="#8e8e8e"/><rect x="558" y="99" width="225" height="1" fill="#8e8e8e"/><rect x="558" y="105" width="225" height="1" fill="#8e8e8e"/><rect x="558" y="111" width="225" height="1" fill="#8e8e8e"/><rect x="558" y="65" width="1" height="47" fill="#8e8e8e"/><rect x="782" y="65" width="1" height="47" fill="#8e8e8e"/><rect x="633" y="99" width="1" height="6" fill="#8e8e8e"/><rect x="717" y="99" width="1" height="6" fill="#8e8e8e"/><rect x="670" y="105" width="1" height="6" fill="#8e8e8e"/><rect x="592.3" y="254.6" width="172.2" height="27.6" fill="#c4c4c4"/><rect x="592.5" y="153.5" width="172" height="128.8" fill="none" stroke="#b8b8b8" stroke-width="1"/><circle cx="611.3" cy="172.7" r="4.1" fill="none" stroke="#20208e" stroke-width="1"/><circle cx="642.3" cy="172.7" r="3.8" fill="none" stroke="#20208e" stroke-width="1"/><circle cx="678.4" cy="172.7" r="4.3" fill="none" stroke="#20208e" stroke-width="1"/><circle cx="713.8" cy="172.7" r="3.8" fill="none" stroke="#20208e" stroke-width="1"/><circle cx="745" cy="172.7" r="4.1" fill="none" stroke="#20208e" stroke-width="1"/><circle cx="611.3" cy="263.3" r="4.2" fill="none" stroke="#4848c8" stroke-width="1"/><circle cx="678.2" cy="263.3" r="4.2" fill="none" stroke="#4848c8" stroke-width="1"/><circle cx="744.8" cy="263.3" r="4.2" fill="none" stroke="#4848c8" stroke-width="1"/><path d="M579.5 153.5V282.2M578 153.5H581M578 282.2H581" stroke="#b4b4b4" stroke-width="1"/><path d="M592.5 295.5H764.5M592.5 293.5V297.5M764.5 293.5V297.5" stroke="#c4c4c4" stroke-width=".8"/><path d="M678.4 185V217.4H713" stroke="#1a561a" stroke-width="1"/></svg>
<div class="t" style="left:619.23px;top:67.53px;font-size:5.8px;line-height:5.8px;color:#d8d8d8;font-weight:400;font-family:'Liberation Mono',monospace;transform:scaleX(0.8379);">Trave: 5  Prop.: 2  Sez.in: 3971.35</div>
<div class="t" style="left:594.28px;top:75.33px;font-size:5.8px;line-height:5.8px;color:#7c7c7c;font-weight:400;font-family:'Liberation Mono',monospace;transform:scaleX(0.8501);">M1 = 0 (0.00)</div>
<div class="t" style="left:596.00px;top:81.33px;font-size:5.8px;line-height:5.8px;color:#7c7c7c;font-weight:400;font-family:'Liberation Mono',monospace;transform:scaleX(0.8583);">N = 0 (0.00)</div>
<div class="t" style="left:593.27px;top:87.13px;font-size:5.8px;line-height:5.8px;color:#e4e4e4;font-weight:400;font-family:'Liberation Mono',monospace;transform:scaleX(0.8631);">V2 = -1.22e+05</div>
<div class="t" style="left:705.68px;top:75.33px;font-size:5.8px;line-height:5.8px;color:#e4e4e4;font-weight:400;font-family:'Liberation Mono',monospace;transform:scaleX(0.8438);">M2 = -8.30e+07</div>
<div class="t" style="left:706.98px;top:81.33px;font-size:5.8px;line-height:5.8px;color:#7c7c7c;font-weight:400;font-family:'Liberation Mono',monospace;transform:scaleX(0.8434);">V1 = 0 (0.00)</div>
<div class="t" style="left:706.68px;top:87.13px;font-size:5.8px;line-height:5.8px;color:#7c7c7c;font-weight:400;font-family:'Liberation Mono',monospace;transform:scaleX(0.8501);">MT = 0 (0.00)</div>
<div class="t" style="left:620.43px;top:94.83px;font-size:5.8px;line-height:5.8px;color:#d8d8d8;font-weight:400;font-family:'Liberation Mono',monospace;transform:scaleX(0.8475);">Coeff. sicur. = 1.40 (Campo 3-CLS)</div>
<div class="t" style="left:583.68px;top:100.63px;font-size:5.8px;line-height:5.8px;color:#c8c8c8;font-weight:400;font-family:'Liberation Mono',monospace;transform:scaleX(0.8482);">Mxu=0.00</div>
<div class="t" style="left:650.52px;top:100.63px;font-size:5.8px;line-height:5.8px;color:#c8c8c8;font-weight:400;font-family:'Liberation Mono',monospace;transform:scaleX(0.7306);">M2u=-1.16e+08</div>
<div class="t" style="left:734.31px;top:100.63px;font-size:5.8px;line-height:5.8px;color:#c8c8c8;font-weight:400;font-family:'Liberation Mono',monospace;transform:scaleX(0.8323);">Nu=0.00</div>
<div class="t" style="left:594.41px;top:106.73px;font-size:5.8px;line-height:5.8px;color:#c8c8c8;font-weight:400;font-family:'Liberation Mono',monospace;transform:scaleX(0.8420);">EpsCu=-0.350%</div>
<div class="t" style="left:706.61px;top:106.73px;font-size:5.8px;line-height:5.8px;color:#c8c8c8;font-weight:400;font-family:'Liberation Mono',monospace;transform:scaleX(0.8354);">EpsSu=0.999%</div>
<div class="t" style="left:674.38px;top:290.90px;font-size:4.5px;line-height:4.5px;color:#cfcfcf;font-weight:400;font-family:'Liberation Sans',sans-serif;transform:scaleX(1.0417);">400</div>
<div class="t" style="left:573.5px;top:215.7px;font-size:4.5px;line-height:4.5px;color:#bfbfbf;transform:rotate(-90deg) scaleX(1.2);transform-origin:50% 50%;width:8px;text-align:center">300</div>
<div class="t" style="left:676.73px;top:177.60px;font-size:4px;line-height:4px;color:#2a8a2a;font-weight:400;font-family:'Liberation Sans',sans-serif;transform:scaleX(1.3736);">2</div>
<div class="t" style="left:713.56px;top:216.20px;font-size:4px;line-height:4px;color:#2a8a2a;font-weight:400;font-family:'Liberation Sans',sans-serif;transform:scaleX(1.4535);">1</div>
<svg class="a" style="left:0;top:350px" width="786" height="50" viewBox="0 350 786 50"><rect x="0" y="356" width="342.7" height="9.3" fill="#f0f0f0"/><rect x="0" y="365.3" width="19.3" height="28" fill="#f0f0f0"/><rect x="316.4" y="365.3" width="26.3" height="28" fill="#ececec"/><path d="M19.3 356V365.3" stroke="#cfcfcf" stroke-width="1"/><path d="M19.3 365.3V393.3" stroke="#e2e2e2" stroke-width="1"/><path d="M46 356V365.3" stroke="#cfcfcf" stroke-width="1"/><path d="M46 365.3V393.3" stroke="#e2e2e2" stroke-width="1"/><path d="M73 356V365.3" stroke="#cfcfcf" stroke-width="1"/><path d="M73 365.3V393.3" stroke="#e2e2e2" stroke-width="1"/><path d="M99.7 356V365.3" stroke="#cfcfcf" stroke-width="1"/><path d="M99.7 365.3V393.3" stroke="#e2e2e2" stroke-width="1"/><path d="M126 356V365.3" stroke="#cfcfcf" stroke-width="1"/><path d="M126 365.3V393.3" stroke="#e2e2e2" stroke-width="1"/><path d="M152.5 356V365.3" stroke="#cfcfcf" stroke-width="1"/><path d="M152.5 365.3V393.3" stroke="#e2e2e2" stroke-width="1"/><path d="M180.4 356V365.3" stroke="#cfcfcf" stroke-width="1"/><path d="M180.4 365.3V393.3" stroke="#e2e2e2" stroke-width="1"/><path d="M207.9 356V365.3" stroke="#cfcfcf" stroke-width="1"/><path d="M207.9 365.3V393.3" stroke="#e2e2e2" stroke-width="1"/><path d="M235.5 356V365.3" stroke="#cfcfcf" stroke-width="1"/><path d="M235.5 365.3V393.3" stroke="#e2e2e2" stroke-width="1"/><path d="M262.5 356V365.3" stroke="#cfcfcf" stroke-width="1"/><path d="M262.5 365.3V393.3" stroke="#e2e2e2" stroke-width="1"/><path d="M289.5 356V365.3" stroke="#cfcfcf" stroke-width="1"/><path d="M289.5 365.3V393.3" stroke="#e2e2e2" stroke-width="1"/><path d="M316.4 356V365.3" stroke="#cfcfcf" stroke-width="1"/><path d="M316.4 365.3V393.3" stroke="#e2e2e2" stroke-width="1"/><path d="M342.7 356V365.3" stroke="#cfcfcf" stroke-width="1"/><path d="M342.7 365.3V393.3" stroke="#e2e2e2" stroke-width="1"/><path d="M19.3 365.3V393.3" stroke="#c8c8c8" stroke-width="1"/><path d="M0 356.2H342.7" stroke="#dedede" stroke-width=".8"/><path d="M0 365.3H342.7" stroke="#c8c8c8" stroke-width="1"/><path d="M0 374.5H19.3" stroke="#d4d4d4" stroke-width="1"/><path d="M19.3 374.5H342.7" stroke="#e6e6e6" stroke-width="1"/><path d="M0 383.8H19.3" stroke="#d4d4d4" stroke-width="1"/><path d="M19.3 383.8H342.7" stroke="#e6e6e6" stroke-width="1"/><path d="M0 393.3H342.7" stroke="#e2e2e2" stroke-width="1"/><path d="M342.7 356V393.3" stroke="#cfcfcf" stroke-width="1"/></svg>
<div class="t" style="left:25.93px;top:358.50px;font-size:6.4px;line-height:6.4px;color:#2a2a2a;font-weight:400;font-family:'Liberation Sans',sans-serif;transform:scaleX(0.8400);">Trave</div>
<div class="t" style="left:56.42px;top:358.50px;font-size:6.4px;line-height:6.4px;color:#2a2a2a;font-weight:400;font-family:'Liberation Sans',sans-serif;transform:scaleX(0.8400);">Z1</div>
<div class="t" style="left:83.27px;top:358.50px;font-size:6.4px;line-height:6.4px;color:#2a2a2a;font-weight:400;font-family:'Liberation Sans',sans-serif;transform:scaleX(0.8400);">Z2</div>
<div class="t" style="left:106.82px;top:358.50px;font-size:6.4px;line-height:6.4px;color:#2a2a2a;font-weight:400;font-family:'Liberation Sans',sans-serif;transform:scaleX(0.8400);">Asup</div>
<div class="t" style="left:134.60px;top:358.50px;font-size:6.4px;line-height:6.4px;color:#2a2a2a;font-weight:400;font-family:'Liberation Sans',sans-serif;transform:scaleX(0.8400);">Ainf</div>
<div class="t" style="left:162.67px;top:358.50px;font-size:6.4px;line-height:6.4px;color:#2a2a2a;font-weight:400;font-family:'Liberation Sans',sans-serif;transform:scaleX(0.8400);">Md</div>
<div class="t" style="left:189.35px;top:358.50px;font-size:6.4px;line-height:6.4px;color:#2a2a2a;font-weight:400;font-family:'Liberation Sans',sans-serif;transform:scaleX(0.8400);">Mdr</div>
<div class="t" style="left:215.97px;top:358.50px;font-size:6.4px;line-height:6.4px;color:#2a2a2a;font-weight:400;font-family:'Liberation Sans',sans-serif;transform:scaleX(0.8400);">Mslv</div>
<div class="t" style="left:245.22px;top:358.50px;font-size:6.4px;line-height:6.4px;color:#2a2a2a;font-weight:400;font-family:'Liberation Sans',sans-serif;transform:scaleX(0.8400);">Mu</div>
<div class="t" style="left:272.55px;top:358.50px;font-size:6.4px;line-height:6.4px;color:#2a2a2a;font-weight:400;font-family:'Liberation Sans',sans-serif;transform:scaleX(0.8400);">x/d</div>
<div class="t" style="left:294.25px;top:358.50px;font-size:6.4px;line-height:6.4px;color:#2a2a2a;font-weight:400;font-family:'Liberation Sans',sans-serif;transform:scaleX(0.8400);">Campo</div>
<div class="t" style="left:322.95px;top:358.50px;font-size:6.4px;line-height:6.4px;color:#2a2a2a;font-weight:400;font-family:'Liberation Sans',sans-serif;transform:scaleX(0.8400);">Errori</div>
<div class="t" style="left:6.32px;top:367.80px;font-size:6.2px;line-height:6.2px;color:#333;font-weight:400;font-family:'Liberation Sans',sans-serif;transform:scaleX(0.8600);">R1</div>
<div class="t" style="left:31.44px;top:367.80px;font-size:6.2px;line-height:6.2px;color:#333;font-weight:400;font-family:'Liberation Sans',sans-serif;transform:scaleX(0.8800);">5</div>
<div class="t" style="left:55.23px;top:367.80px;font-size:6.2px;line-height:6.2px;color:#333;font-weight:400;font-family:'Liberation Sans',sans-serif;transform:scaleX(0.8800);">250</div>
<div class="t" style="left:80.51px;top:367.80px;font-size:6.2px;line-height:6.2px;color:#333;font-weight:400;font-family:'Liberation Sans',sans-serif;transform:scaleX(0.8800);">1997</div>
<div class="t" style="left:107.86px;top:367.80px;font-size:6.2px;line-height:6.2px;color:#333;font-weight:400;font-family:'Liberation Sans',sans-serif;transform:scaleX(0.8800);">9.42</div>
<div class="t" style="left:134.26px;top:367.80px;font-size:6.2px;line-height:6.2px;color:#333;font-weight:400;font-family:'Liberation Sans',sans-serif;transform:scaleX(0.8800);">9.42</div>
<div class="t" style="left:155.74px;top:367.80px;font-size:6.2px;line-height:6.2px;color:#333;font-weight:400;font-family:'Liberation Sans',sans-serif;transform:scaleX(0.9000);">4.40e+07</div>
<div class="t" style="left:183.24px;top:367.80px;font-size:6.2px;line-height:6.2px;color:#333;font-weight:400;font-family:'Liberation Sans',sans-serif;transform:scaleX(0.9000);">4.40e+07</div>
<div class="t" style="left:210.84px;top:367.80px;font-size:6.2px;line-height:6.2px;color:#333;font-weight:400;font-family:'Liberation Sans',sans-serif;transform:scaleX(0.9000);">2.19e+07</div>
<div class="t" style="left:237.84px;top:367.80px;font-size:6.2px;line-height:6.2px;color:#333;font-weight:400;font-family:'Liberation Sans',sans-serif;transform:scaleX(0.9000);">8.30e+07</div>
<div class="t" style="left:271.02px;top:367.80px;font-size:6.2px;line-height:6.2px;color:#333;font-weight:400;font-family:'Liberation Sans',sans-serif;transform:scaleX(0.8800);">0.21</div>
<div class="t" style="left:301.75px;top:367.80px;font-size:6.2px;line-height:6.2px;color:#333;font-weight:400;font-family:'Liberation Sans',sans-serif;transform:scaleX(0.8800);">3</div>
<div class="t" style="left:6.32px;top:377.00px;font-size:6.2px;line-height:6.2px;color:#333;font-weight:400;font-family:'Liberation Sans',sans-serif;transform:scaleX(0.8600);">R2</div>
<div class="t" style="left:31.44px;top:377.00px;font-size:6.2px;line-height:6.2px;color:#333;font-weight:400;font-family:'Liberation Sans',sans-serif;transform:scaleX(0.8800);">5</div>
<div class="t" style="left:55.23px;top:377.00px;font-size:6.2px;line-height:6.2px;color:#333;font-weight:400;font-family:'Liberation Sans',sans-serif;transform:scaleX(0.8800);">250</div>
<div class="t" style="left:80.51px;top:377.00px;font-size:6.2px;line-height:6.2px;color:#333;font-weight:400;font-family:'Liberation Sans',sans-serif;transform:scaleX(0.8800);">1997</div>
<div class="t" style="left:107.86px;top:377.00px;font-size:6.2px;line-height:6.2px;color:#333;font-weight:400;font-family:'Liberation Sans',sans-serif;transform:scaleX(0.8800);">9.42</div>
<div class="t" style="left:134.26px;top:377.00px;font-size:6.2px;line-height:6.2px;color:#333;font-weight:400;font-family:'Liberation Sans',sans-serif;transform:scaleX(0.8800);">9.42</div>
<div class="t" style="left:153.90px;top:377.00px;font-size:6.2px;line-height:6.2px;color:#333;font-weight:400;font-family:'Liberation Sans',sans-serif;transform:scaleX(0.9000);">-5.06e+07</div>
<div class="t" style="left:181.40px;top:377.00px;font-size:6.2px;line-height:6.2px;color:#333;font-weight:400;font-family:'Liberation Sans',sans-serif;transform:scaleX(0.9000);">-7.87e+07</div>
<div class="t" style="left:209.00px;top:377.00px;font-size:6.2px;line-height:6.2px;color:#333;font-weight:400;font-family:'Liberation Sans',sans-serif;transform:scaleX(0.9000);">-4.64e+07</div>
<div class="t" style="left:236.00px;top:377.00px;font-size:6.2px;line-height:6.2px;color:#333;font-weight:400;font-family:'Liberation Sans',sans-serif;transform:scaleX(0.9000);">-8.30e+07</div>
<div class="t" style="left:271.02px;top:377.00px;font-size:6.2px;line-height:6.2px;color:#333;font-weight:400;font-family:'Liberation Sans',sans-serif;transform:scaleX(0.8800);">0.21</div>
<div class="t" style="left:301.75px;top:377.00px;font-size:6.2px;line-height:6.2px;color:#333;font-weight:400;font-family:'Liberation Sans',sans-serif;transform:scaleX(0.8800);">3</div>
<div class="t" style="left:6.31px;top:386.20px;font-size:6.2px;line-height:6.2px;color:#333;font-weight:400;font-family:'Liberation Sans',sans-serif;transform:scaleX(0.8600);">R3</div>
<div class="t" style="left:31.44px;top:386.20px;font-size:6.2px;line-height:6.2px;color:#333;font-weight:400;font-family:'Liberation Sans',sans-serif;transform:scaleX(0.8800);">5</div>
<div class="t" style="left:53.66px;top:386.20px;font-size:6.2px;line-height:6.2px;color:#333;font-weight:400;font-family:'Liberation Sans',sans-serif;transform:scaleX(0.8800);">1997</div>
<div class="t" style="left:80.55px;top:386.20px;font-size:6.2px;line-height:6.2px;color:#333;font-weight:400;font-family:'Liberation Sans',sans-serif;transform:scaleX(0.8800);">2000</div>
<div class="t" style="left:107.86px;top:386.20px;font-size:6.2px;line-height:6.2px;color:#333;font-weight:400;font-family:'Liberation Sans',sans-serif;transform:scaleX(0.8800);">9.42</div>
<div class="t" style="left:134.26px;top:386.20px;font-size:6.2px;line-height:6.2px;color:#333;font-weight:400;font-family:'Liberation Sans',sans-serif;transform:scaleX(0.8800);">9.42</div>
<div class="t" style="left:155.74px;top:386.20px;font-size:6.2px;line-height:6.2px;color:#333;font-weight:400;font-family:'Liberation Sans',sans-serif;transform:scaleX(0.9000);">4.40e+07</div>
<div class="t" style="left:183.24px;top:386.20px;font-size:6.2px;line-height:6.2px;color:#333;font-weight:400;font-family:'Liberation Sans',sans-serif;transform:scaleX(0.9000);">4.40e+07</div>
<div class="t" style="left:210.84px;top:386.20px;font-size:6.2px;line-height:6.2px;color:#333;font-weight:400;font-family:'Liberation Sans',sans-serif;transform:scaleX(0.9000);">2.19e+07</div>
<div class="t" style="left:237.84px;top:386.20px;font-size:6.2px;line-height:6.2px;color:#333;font-weight:400;font-family:'Liberation Sans',sans-serif;transform:scaleX(0.9000);">8.30e+07</div>
<div class="t" style="left:271.02px;top:386.20px;font-size:6.2px;line-height:6.2px;color:#333;font-weight:400;font-family:'Liberation Sans',sans-serif;transform:scaleX(0.8800);">0.21</div>
<div class="t" style="left:301.75px;top:386.20px;font-size:6.2px;line-height:6.2px;color:#333;font-weight:400;font-family:'Liberation Sans',sans-serif;transform:scaleX(0.8800);">3</div>
<svg class="a" style="left:0;top:390px" width="786" height="16" viewBox="0 390 786 16"><rect x="0" y="394" width="786" height="1" fill="#7c7c7c"/><rect x="0" y="395" width="786" height="1" fill="#cfcfd4"/><path d="M2.8 398V401M6 398L4 399.5 6 401z" fill="#b0b0b0" stroke="#b0b0b0" stroke-width=".6"/><path d="M12.5 398L10.5 399.5 12.5 401z" fill="#b0b0b0"/><path d="M18.5 398L20.5 399.5 18.5 401z" fill="#b0b0b0"/><path d="M26 398L28 399.5 26 401zM28.8 398V401" fill="#b0b0b0" stroke="#b0b0b0" stroke-width=".6"/><path d="M88 395.5L92.5 403.5H146 L150.5 395.5" fill="#f4f4f6" stroke="#7a7a7a" stroke-width=".8"/><path d="M150 395.5L154.5 403.5H188 L192.5 395.5" fill="#f4f4f6" stroke="#7a7a7a" stroke-width=".8"/><path d="M192 395.5L196.5 403.5H229 L233.5 395.5" fill="#f4f4f6" stroke="#7a7a7a" stroke-width=".8"/><path d="M31 395.2L35.8 403.5H84L88.6 395.2" fill="#ffffff" stroke="#6a6a6a" stroke-width=".9"/><rect x="31.5" y="394" width="56.6" height="2" fill="#ffffff"/><path d="M401 397v1M401 399v1M401 401v1" stroke="#777" stroke-width="1"/><path d="M409 397.5L406.5 399.5 409 401.5z" fill="#555"/><rect x="411" y="397.5" width="9" height="4.5" fill="#c8c8d8"/><path d="M772 397.5L774.5 399.5 772 401.5z" fill="#555"/></svg>
<div class="t" style="left:36.13px;top:396.24px;font-size:6.2px;line-height:6.2px;color:#111;font-weight:700;font-family:'Liberation Sans',sans-serif;transform:scaleX(0.9284);">P.F.-S.L.U.-NTC18</div>
<div class="t" style="left:93.87px;top:396.40px;font-size:6.2px;line-height:6.2px;color:#333;font-weight:400;font-family:'Liberation Sans',sans-serif;transform:scaleX(0.8680);">Taglio S.L.U.-NTC18</div>
<div class="t" style="left:154.36px;top:396.40px;font-size:6.2px;line-height:6.2px;color:#333;font-weight:400;font-family:'Liberation Sans',sans-serif;transform:scaleX(0.8432);">S.L.E.-NTC18</div>
<div class="t" style="left:195.76px;top:396.40px;font-size:6.2px;line-height:6.2px;color:#333;font-weight:400;font-family:'Liberation Sans',sans-serif;transform:scaleX(0.8645);">S.L.F.-NTC18</div>
<div class="a" style="left:777px;top:356px;width:9px;height:38px;background:#f0f0f0;"></div>
<svg class="a" style="left:779px;top:358px;" width="5" height="4" viewBox="0 0 5 4"><path d="M.5 3L2.5 1 4.5 3" fill="none" stroke="#555" stroke-width=".9"/></svg>
<div class="a" style="left:778px;top:365px;width:7px;height:9px;background:#cdcdcd;"></div>
<svg class="a" style="left:779px;top:388px;" width="5" height="4" viewBox="0 0 5 4"><path d="M.5 1L2.5 3 4.5 1" fill="none" stroke="#555" stroke-width=".9"/></svg>
<svg class="a" style="left:1px;top:405px;" width="3" height="12" viewBox="0 0 3 12"><path d="M.5 0V12M2.5 1V12" stroke="#c2c2c8" stroke-width="1" stroke-dasharray="1 1"/></svg>
<svg class="a" style="left:5px;top:406px;" width="10" height="10" viewBox="0 0 10 10"><rect x=".5" y=".5" width="6" height="6" fill="#e8e8f0" stroke="#555" stroke-width=".8"/><path d="M2 2h3M2 3.5h3" stroke="#c03030" stroke-width=".6"/><circle cx="5.5" cy="5.5" r="2" fill="#cfe" stroke="#222" stroke-width=".8"/><path d="M7 7l2.5 2.5" stroke="#111" stroke-width="1.2"/></svg>
<div class="a" style="left:18px;top:406px;width:1px;height:10px;background:#d6d6dc;"></div>
<svg class="a" style="left:21px;top:406px;" width="9" height="10" viewBox="0 0 9 10"><path d="M1 7.5h7" stroke="#2030c0" stroke-width="1"/><path d="M4.5 7.5v-5" stroke="#d03030" stroke-width=".8"/><path d="M2 2h1.5M5.5 2H7" stroke="#3040c0" stroke-width=".7"/><path d="M1 9h7" stroke="#999" stroke-width=".6"/></svg>
<div class="a" style="left:31px;top:405px;width:13px;height:12.5px;background:#dfeaf6;border:1px solid #99c4e8"></div>
<svg class="a" style="left:33px;top:406px;" width="9" height="10" viewBox="0 0 9 10"><path d="M1 7.5h7" stroke="#2030c0" stroke-width="1"/><path d="M4.5 7.5v-5" stroke="#d03030" stroke-width=".8"/><path d="M2 2h1.5M5.5 2H7" stroke="#3040c0" stroke-width=".7"/><path d="M1 9h7" stroke="#999" stroke-width=".6"/></svg>
<div class="a" style="left:48px;top:405px;width:61px;height:12px;background:#ffffff;border:1px solid #e8e8ec"></div>
<div class="t" style="left:50.30px;top:408.80px;font-size:6.5px;line-height:6.5px;color:#555;font-weight:400;font-family:'Liberation Sans',sans-serif;transform:scaleX(0.7834);">3971.35</div>
<div class="a" style="left:113.5px;top:405.5px;width:13px;height:12px;background:#dfeaf6;border:1px solid #99c4e8"></div>
<div class="t" style="left:115.19px;top:409.84px;font-size:5.2px;line-height:5.2px;color:#222;font-weight:700;font-family:'Liberation Sans',sans-serif;transform:scaleX(0.9255);">Max</div>
<div class="t" style="left:126.51px;top:409.80px;font-size:5.5px;line-height:5.5px;color:#222;font-weight:400;font-family:'Liberation Sans',sans-serif;transform:scaleX(1.1170);">Min</div>
<div class="a" style="left:140px;top:406px;width:1px;height:10px;background:#d6d6dc;"></div>
<div class="t" style="left:142.97px;top:408.00px;font-size:7px;line-height:7px;color:#333;font-weight:400;font-family:'Liberation Sans',sans-serif;transform:scaleX(0.7357);">V1</div>
<div class="t" style="left:154.56px;top:408.00px;font-size:7px;line-height:7px;color:#333;font-weight:400;font-family:'Liberation Sans',sans-serif;transform:scaleX(0.7937);">M1</div>
<div class="t" style="left:165.97px;top:408.00px;font-size:7px;line-height:7px;color:#333;font-weight:400;font-family:'Liberation Sans',sans-serif;transform:scaleX(0.7971);">V2</div>
<div class="t" style="left:177.49px;top:408.00px;font-size:7px;line-height:7px;color:#333;font-weight:400;font-family:'Liberation Sans',sans-serif;transform:scaleX(0.9070);">M2</div>
<div class="t" style="left:190.98px;top:408.00px;font-size:7px;line-height:7px;color:#333;font-weight:400;font-family:'Liberation Sans',sans-serif;transform:scaleX(0.6969);">AF</div>
<div class="t" style="left:201.52px;top:408.00px;font-size:7px;line-height:7px;color:#333;font-weight:400;font-family:'Liberation Sans',sans-serif;transform:scaleX(0.8497);">MT</div>
<div class="a" style="left:214px;top:413px;width:1px;height:1px;background:#555;"></div>
<svg class="a" style="left:787px;top:48px" width="13" height="185" viewBox="0 48 13 185"><path d="M3 53.5H13" stroke="#c4c4cc" stroke-width="1" stroke-dasharray="1 1"/><rect x=".5" y="56.5" width="12" height="10.5" fill="#f3f3f6" stroke="#e0e0e5" stroke-width=".8"/><rect x=".5" y="67" width="12" height="11" fill="#f3f3f6" stroke="#e0e0e5" stroke-width=".8"/><circle cx="5.5" cy="61.2" r=".9" fill="#888"/><path d="M2 76L9.5 69.5" stroke="#808080" stroke-width="1"/><path d="M1 80.9H12" stroke="#d8d8de" stroke-width=".8"/><path d="M2.5 91L9 86" stroke="#808080" stroke-width="1"/><path d="M3.5 97.7h5M3.5 103.8h5M6 97.7v6.1" stroke="#909090" stroke-width="1.3"/><rect x=".5" y="106.8" width="12" height="11.5" fill="#f3f3f6" stroke="#e0e0e5" stroke-width=".8"/><path d="M2.5 115l4-5.5 2.5 1.8-4 5.5z" fill="#a0a0a0"/><path d="M1 120.5H12" stroke="#d8d8de" stroke-width=".8"/><path d="M2.5 125v3M2.5 125l2 2M5 130.5l3-3" stroke="#909090" stroke-width=".8" fill="none"/><circle cx="8" cy="127.5" r="1" fill="none" stroke="#909090" stroke-width=".7"/><path d="M2 142.3h8M4 141l2-3.5 2 3.5" stroke="#909090" stroke-width=".9" fill="none"/><path d="M2 153.4h8M8.5 152l1.5 1.4-1.5 1.4M4.8 151.5v-4h1.8a1 1 0 0 1 0 2H4.8" stroke="#909090" stroke-width=".8" fill="none"/><path d="M1 159.1H12" stroke="#d8d8de" stroke-width=".8"/><path d="M2.5 170.5l7-6.5M5 166.5l2 1.5" stroke="#909090" stroke-width=".9" fill="none"/><rect x=".5" y="173.5" width="12" height="10.199999999999989" fill="#f3f3f6" stroke="#e0e0e5" stroke-width=".8"/><path d="M2.5 177h6v3.5M7 180.5h3" stroke="#808080" stroke-width="1" fill="none"/><path d="M2 190h5M7 190l2-2v2" stroke="#909090" stroke-width="1.1" fill="none"/><path d="M1.5 203.5h9M3 203q3-4 6 0" stroke="#909090" stroke-width=".9" fill="none"/><path d="M1 210.5H12" stroke="#d8d8de" stroke-width=".8"/><path d="M2 214.5h3M2 216.5h3M3.5 213.5v4" stroke="#909090" stroke-width=".7"/><rect x="5.5" y="217" width="5" height="4.5" fill="none" stroke="#808080" stroke-width=".8"/><rect x="4" y="218.5" width="3" height="3" fill="#999"/><circle cx="3.5" cy="226" r=".7" fill="#444"/></svg>
</body></html>
